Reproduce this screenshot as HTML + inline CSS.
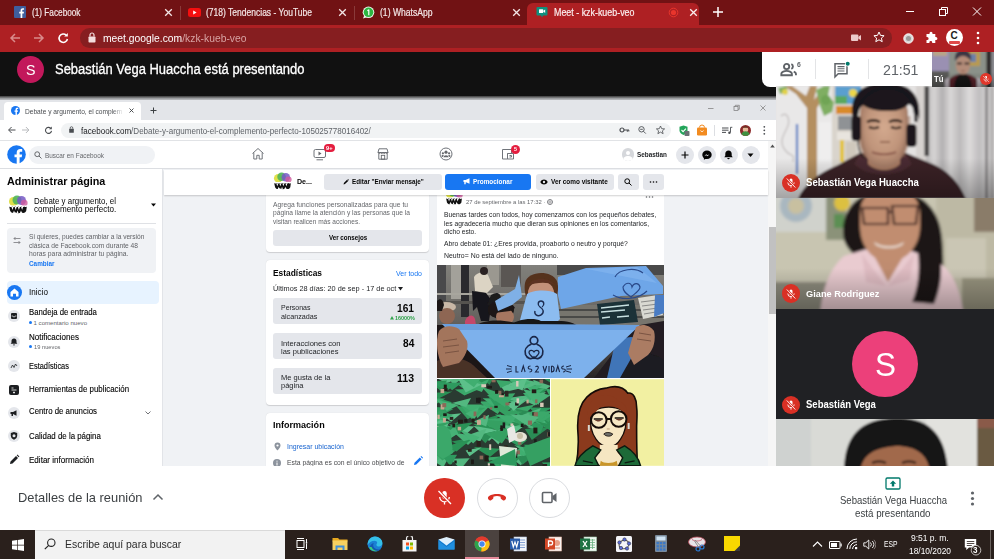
<!DOCTYPE html>
<html><head><meta charset="utf-8">
<style>
*{box-sizing:border-box;margin:0;padding:0}
html,body{width:994px;height:560px;overflow:hidden;background:#fff;font-family:"Liberation Sans",sans-serif;}
.a{position:absolute}
#root{position:relative;width:994px;height:560px;overflow:hidden}
.t{position:absolute;white-space:nowrap;line-height:1;transform-origin:0 0}
</style></head><body>
<div id="root">
<!-- CHROME TAB STRIP -->
<div class="a" style="left:0;top:0;width:994px;height:25px;background:#711214"></div>
<div class="a" style="left:527px;top:3px;width:172px;height:23px;background:#ae2023;border-radius:6px 6px 0 0"></div>
<!-- tab 1 facebook -->
<svg class="a" style="left:14px;top:6px" width="12" height="12" viewBox="0 0 12 12"><rect width="12" height="12" rx="1" fill="#3f5e9e"/><path d="M8.3 12V7.6h1.4l.25-1.8H8.3V4.7c0-.5.15-.85.9-.85h.85V2.3C9.9 2.28 9.4 2.2 8.8 2.2 7.5 2.2 6.6 3 6.6 4.5v1.3H5.2v1.8h1.4V12z" fill="#fff"/></svg>
<div class="t" style="left:32px;top:8.00px;font-size:10.3px;color:#f3e6e6;transform:scaleX(0.7992);-webkit-text-stroke:.2px #f3e6e6">(1) Facebook</div>
<svg class="a" style="left:164px;top:8px" width="9" height="9" viewBox="0 0 9 9"><path d="M1.2 1.2L7.8 7.8M7.8 1.2L1.2 7.8" stroke="#f3e6e6" stroke-width="1.3"/></svg>
<div class="a" style="left:180px;top:6px;width:1px;height:14px;background:#8a3a3a"></div>
<!-- tab 2 youtube -->
<svg class="a" style="left:188px;top:8px" width="13" height="9" viewBox="0 0 13 9"><rect width="13" height="9" rx="2.5" fill="#f40f0f"/><path d="M5.2 2.4L8.6 4.5 5.2 6.6z" fill="#fff"/></svg>
<div class="t" style="left:205.5px;top:8.00px;font-size:10.3px;color:#f3e6e6;transform:scaleX(0.8263);-webkit-text-stroke:.2px #f3e6e6">(718) Tendencias - YouTube</div>
<svg class="a" style="left:338px;top:8px" width="9" height="9" viewBox="0 0 9 9"><path d="M1.2 1.2L7.8 7.8M7.8 1.2L1.2 7.8" stroke="#f3e6e6" stroke-width="1.3"/></svg>
<div class="a" style="left:354px;top:6px;width:1px;height:14px;background:#8a3a3a"></div>
<!-- tab 3 whatsapp -->
<svg class="a" style="left:362px;top:6px" width="13" height="13" viewBox="0 0 13 13"><circle cx="6.5" cy="6.3" r="5.8" fill="#e9f7ea"/><circle cx="6.5" cy="6.3" r="4.8" fill="#2cb742"/><path d="M1 12.6l1.2-3.2 2 2z" fill="#e9f7ea"/><path d="M6.8 3.6v5.6M6.8 3.6L5.4 4.8" stroke="#fff" stroke-width="1.2" fill="none"/></svg>
<div class="t" style="left:380px;top:8.00px;font-size:10.3px;color:#f3e6e6;transform:scaleX(0.8338);-webkit-text-stroke:.2px #f3e6e6">(1) WhatsApp</div>
<svg class="a" style="left:512px;top:8px" width="9" height="9" viewBox="0 0 9 9"><path d="M1.2 1.2L7.8 7.8M7.8 1.2L1.2 7.8" stroke="#f3e6e6" stroke-width="1.3"/></svg>
<!-- tab 4 meet (active) -->
<svg class="a" style="left:536px;top:6px" width="12" height="12" viewBox="0 0 12 12"><path d="M1.5 1h9a1 1 0 0 1 1 1v6.5a1 1 0 0 1-1 1H7L6 11.5 5 9.5H1.5a1 1 0 0 1-1-1V2a1 1 0 0 1 1-1z" fill="#0f8f7d"/><rect x="3" y="3.3" width="4.2" height="3.6" rx=".5" fill="#fff"/><path d="M7.2 4.8L9.2 3.4v3.6L7.2 5.6z" fill="#fff"/></svg>
<div class="t" style="left:554px;top:8.00px;font-size:10.3px;color:#fbeeee;transform:scaleX(0.8628);-webkit-text-stroke:.2px #fbeeee">Meet - kzk-kueb-veo</div>
<svg class="a" style="left:668px;top:7px" width="11" height="11" viewBox="0 0 11 11"><circle cx="5.5" cy="5.5" r="4.3" fill="none" stroke="#e8352c" stroke-width="1"/><circle cx="5.5" cy="5.5" r="2.6" fill="#e8352c"/></svg>
<svg class="a" style="left:689px;top:8px" width="9" height="9" viewBox="0 0 9 9"><path d="M1.2 1.2L7.8 7.8M7.8 1.2L1.2 7.8" stroke="#fbeeee" stroke-width="1.3"/></svg>
<svg class="a" style="left:712px;top:6px" width="12" height="12" viewBox="0 0 12 12"><path d="M6 1v10M1 6h10" stroke="#fff" stroke-width="1.5"/></svg>
<!-- window controls -->
<svg class="a" style="left:905px;top:6px" width="80" height="12" viewBox="0 0 80 12"><path d="M1 5.5h8" stroke="#fff" stroke-width="1"/><rect x="34.5" y="3.5" width="6" height="6" fill="none" stroke="#fff" stroke-width="1"/><path d="M36.5 3.5v-2h6v6h-2" fill="none" stroke="#fff" stroke-width="1"/><path d="M68 1.5l8 8M76 1.5l-8 8" stroke="#fff" stroke-width="1"/></svg>
<!-- ADDRESS BAR -->
<div class="a" style="left:0;top:25px;width:994px;height:27px;background:#ae2023"></div>
<div class="a" style="left:80px;top:28.300px;width:812px;height:19.400px;border-radius:9.700px;background:#861e20"></div>
<svg class="a" style="left:9px;top:32px" width="62" height="12" viewBox="0 0 62 12"><path d="M11 6H2.5M6 2L2 6l4 4" stroke="#d98b8b" stroke-width="1.5" fill="none"/><path d="M25 6h8.5M30 2l4 4-4 4" stroke="#d98b8b" stroke-width="1.5" fill="none"/><path d="M57.2 3.2A4.2 4.2 0 1 0 58.4 7" stroke="#fff" stroke-width="1.6" fill="none"/><path d="M58.8 1v3.6h-3.6z" fill="#fff"/></svg>
<svg class="a" style="left:88px;top:32px" width="8" height="11" viewBox="0 0 8 11"><rect x=".5" y="4.5" width="7" height="6" rx=".8" fill="#f3dede"/><path d="M2 4.5V3a2 2 0 0 1 4 0v1.5" stroke="#f3dede" stroke-width="1.2" fill="none"/></svg>
<div class="t" style="left:103px;top:33.00px;font-size:11.3px;color:#fff;transform:scaleX(0.9139);">meet.google.com<span style="color:#d8a3a3">/kzk-kueb-veo</span></div>
<!-- toolbar right icons -->
<svg class="a" style="left:850.500px;top:34px" width="10.500" height="7.300" viewBox="0 0 13 9"><rect x="0" y=".5" width="9" height="8" rx="1" fill="#ecc9c9"/><path d="M9 3.4L12.5 1v7L9 5.6z" fill="#ecc9c9"/></svg>
<svg class="a" style="left:873px;top:31px" width="12" height="12" viewBox="0 0 12 12"><path d="M6 1l1.5 3.4 3.6.3-2.7 2.4.8 3.6L6 8.8 2.8 10.7l.8-3.6L.9 4.7l3.6-.3z" fill="none" stroke="#fff" stroke-width="1"/></svg>
<svg class="a" style="left:902.500px;top:32.500px" width="11" height="11" viewBox="0 0 14 14"><circle cx="7" cy="7" r="6" fill="#d9d9d9" stroke="#fff" stroke-width="1.2"/><circle cx="7" cy="7" r="3.2" fill="#9a9a9a"/></svg>
<svg class="a" style="left:924px;top:31px" width="14" height="14" viewBox="0 0 14 14"><path d="M5.5 2.2a1.5 1.5 0 0 1 3 0V3h2.8v2.9h.6a1.5 1.5 0 0 1 0 3h-.6V12H8.2v-.7a1.4 1.4 0 0 0-2.8 0v.7H2.5V8.9h.6a1.5 1.5 0 0 0 0-3h-.6V3h3z" fill="#fff"/></svg>
<div class="a" style="left:946px;top:29px;width:17px;height:17px;border-radius:50%;background:#fff;overflow:hidden"><div class="t" style="left:4.5px;top:1.5px;font-size:10px;font-weight:bold;color:#222">C</div><div class="a" style="left:3px;top:11.5px;width:11px;height:3px;background:#e04a4a;border-radius:1px"></div></div>
<svg class="a" style="left:976px;top:31px" width="4" height="14" viewBox="0 0 4 14"><circle cx="2" cy="2" r="1.3" fill="#fff"/><circle cx="2" cy="7" r="1.3" fill="#fff"/><circle cx="2" cy="12" r="1.3" fill="#fff"/></svg>
<!-- MEET TOP BAR -->
<div class="a" style="left:0;top:52px;width:994px;height:44px;background:#111111"></div>
<div class="a" style="left:17px;top:55.5px;width:27px;height:27px;border-radius:50%;background:#c2185b"></div>
<div class="t" style="left:26px;top:62.00px;font-size:14.9918px;color:#fff;transform:scaleX(0.9500);">S</div>
<div class="t" style="left:55.3px;top:62.00px;font-size:14px;color:#fff;transform:scaleX(0.9264);-webkit-text-stroke:.3px #fff">Sebastián Vega Huaccha está presentando</div>
<!-- meet top-right pill -->
<div class="a" style="left:762px;top:51.5px;width:170px;height:35px;background:#fff;border-radius:0 0 0 8px"></div>
<div class="a" style="left:815px;top:59px;width:1px;height:20px;background:#e3e4e6"></div>
<div class="a" style="left:868px;top:59px;width:1px;height:20px;background:#e3e4e6"></div>
<svg class="a" style="left:779.500px;top:60.500px" width="22" height="16.500" viewBox="0 0 20 15"><circle cx="6" cy="5" r="2.4" fill="none" stroke="#5f6368" stroke-width="1.700"/><path d="M1.2 13v-1.3c0-1.8 3-2.7 4.8-2.7s4.8.9 4.8 2.7V13z" fill="none" stroke="#5f6368" stroke-width="1.700"/><path d="M10.3 2.8a2.4 2.4 0 0 1 0 4.4M12.5 9.6c1.2.5 2 1.200 2 2.100V13" fill="none" stroke="#5f6368" stroke-width="1.700"/></svg>
<div class="t" style="left:796.5px;top:61.00px;font-size:7.5px;color:#5f6368;font-weight:bold;transform:scaleX(0.9110);">6</div>
<svg class="a" style="left:833px;top:61px" width="18" height="18" viewBox="0 0 18 18"><path d="M2 2.700h12v10H5.200L2 16z" fill="none" stroke="#5f6368" stroke-width="1.5"/><path d="M4.500 5.600h7M4.500 7.800h7M4.500 10h7" stroke="#5f6368" stroke-width="1.100"/><circle cx="14.700" cy="2.700" r="2.700" fill="#fff"/><circle cx="14.700" cy="2.700" r="2" fill="#00796b"/></svg>
<div class="t" style="left:882.5px;top:63.00px;font-size:14.9324px;color:#5f6368;transform:scaleX(0.9500);">21:51</div>
<!-- PRESENTATION (inner screen share) -->
<div class="a" style="left:0;top:95.5px;width:776px;height:5px;background:linear-gradient(#3a3a3a,#9b9da0 50%,#d6d8dc)"></div>
<div class="a" style="left:0;top:100px;width:776px;height:20px;background:#e3e5e9"></div>
<div class="a" style="left:4px;top:101.500px;width:137px;height:19px;background:#fff;border-radius:4px 4px 0 0"></div>
<svg class="a" style="left:10.500px;top:105.500px" width="9" height="9" viewBox="0 0 9 9"><circle cx="4.500" cy="4.500" r="4.500" fill="#1877f2"/><path d="M5.900 9V5.700h1l.2-1.300H5.900v-.800c0-.4.100-.6.600-.6h.7V1.900c-.1 0-.5-.1-1-.1-1 0-1.700.6-1.700 1.700v.9h-1v1.300h1V9z" fill="#fff"/></svg>
<div class="t" style="left:24.5px;top:109.00px;font-size:6.96759px;color:#4a4d51;transform:scaleX(0.9500);">Debate y argumento, el complem</div>
<div class="a" style="left:112px;top:104px;width:12px;height:12px;background:linear-gradient(90deg,rgba(255,255,255,0),#fff)"></div>
<svg class="a" style="left:128.500px;top:107.500px" width="5" height="5" viewBox="0 0 5 5"><path d="M.5.500l4 4M4.500.500l-4 4" stroke="#3c4043" stroke-width=".9"/></svg>
<svg class="a" style="left:149.500px;top:107px" width="7" height="7" viewBox="0 0 7 7"><path d="M3.500.500v6M.500 3.500h6" stroke="#3c4043" stroke-width="1"/></svg>
<svg class="a" style="left:706px;top:104px" width="62" height="8" viewBox="0 0 62 8"><path d="M2 4.500h5.500" stroke="#777" stroke-width=".7"/><rect x="28" y="2.500" width="4" height="4" fill="none" stroke="#777" stroke-width=".7"/><path d="M29.300 2.500V1.300h4v4h-1.300" fill="none" stroke="#777" stroke-width=".7"/><path d="M54.500 1.500l5 5M59.500 1.500l-5 5" stroke="#777" stroke-width=".7"/></svg>
<!-- inner toolbar -->
<div class="a" style="left:0;top:120px;width:776px;height:20.500px;background:#fff;border-bottom:1px solid #e1e3e6"></div>
<div class="a" style="left:61px;top:122.500px;width:610px;height:15px;border-radius:7.500px;background:#f1f3f4"></div>
<svg class="a" style="left:7px;top:126px" width="48" height="8" viewBox="0 0 48 8"><path d="M8.500 4H1.800M4.600 1L1.600 4l3 3" stroke="#4a4d51" stroke-width="1" fill="none"/><path d="M15 4h6.700M18.900 1l3 3-3 3" stroke="#b8babd" stroke-width="1" fill="none"/><path d="M43.600 2.200A3 3 0 1 0 44.500 4.800" stroke="#4a4d51" stroke-width="1.100" fill="none"/><path d="M44.800.500v2.700h-2.700z" fill="#4a4d51"/></svg>
<svg class="a" style="left:68.500px;top:126px" width="5" height="7" viewBox="0 0 5 7"><rect x=".2" y="2.800" width="4.600" height="4" rx=".5" fill="#4a4d51"/><path d="M1.200 2.800V2a1.300 1.300 0 0 1 2.600 0v.8" stroke="#4a4d51" stroke-width=".8" fill="none"/></svg>
<div class="t" style="left:80.5px;top:127.00px;font-size:8.48881px;color:#202124;transform:scaleX(0.9500);">facebook.com<span style="color:#5f6368">/Debate-y-argumento-el-complemento-perfecto-105025778016402/</span></div>
<svg class="a" style="left:619px;top:125px" width="48" height="10" viewBox="0 0 48 10"><circle cx="3" cy="5" r="2" fill="none" stroke="#4a4d51" stroke-width="1.200"/><path d="M5 5h5M8.300 5v1.800M9.800 5v1.500" stroke="#4a4d51" stroke-width="1"/><circle cx="22.500" cy="4.300" r="2.700" fill="none" stroke="#4a4d51" stroke-width=".9"/><path d="M24.500 6.300l2.300 2.300M21.200 4.300h2.600" stroke="#4a4d51" stroke-width=".9"/><path d="M41.500 1l1.200 2.700 2.900.2-2.200 1.900.7 2.900-2.600-1.600-2.600 1.600.7-2.900-2.200-1.900 2.900-.2z" fill="none" stroke="#4a4d51" stroke-width=".8"/></svg>
<svg class="a" style="left:678px;top:124px" width="92" height="13" viewBox="0 0 92 13"><path d="M5.500 1.500l4 1.200v3.800c0 2.300-2 3.800-4 4.500-2-.7-4-2.200-4-4.500V2.700z" fill="#23a55a"/><path d="M3.500 6l1.600 1.600 2.800-3" stroke="#fff" stroke-width="1.100" fill="none"/><rect x="6.500" y="7" width="5" height="5" rx=".8" fill="#6b7075"/><rect x="19" y="3.500" width="10" height="8" rx="1.200" fill="#f28b20"/><path d="M21.500 3.500a2.500 2.500 0 0 1 5 0" fill="none" stroke="#f28b20" stroke-width="1"/><path d="M22.500 6.500a1.600 1.600 0 0 0 3 0" fill="none" stroke="#fff" stroke-width=".8"/><path d="M44 4h6.500M44 6.200h6.500M44 8.400h4" stroke="#4a4d51" stroke-width="1"/><path d="M52.500 3.300v5.200" stroke="#4a4d51" stroke-width=".9"/><circle cx="51.400" cy="8.700" r="1.200" fill="#4a4d51"/><path d="M52.500 3.300h1.800" stroke="#4a4d51" stroke-width=".9"/><circle cx="67.500" cy="6.500" r="5.500" fill="#8c2a2a"/><circle cx="67.500" cy="5.500" r="2.700" fill="#e7b99a"/><path d="M63.400 10.200a4.300 4.300 0 0 1 8.200 0 5.500 5.500 0 0 1-8.200 0z" fill="#3f8f3f"/><path d="M64.600 4.500a3 3 0 0 1 5.800 0l-1-.8h-3.800z" fill="#5a2a1a"/><circle cx="86.300" cy="2.800" r=".9" fill="#4a4d51"/><circle cx="86.300" cy="6.300" r=".9" fill="#4a4d51"/><circle cx="86.300" cy="9.800" r=".9" fill="#4a4d51"/></svg>
<div class="a" style="left:714px;top:125px;width:1px;height:11px;background:#dcdee2"></div>
<!-- FB page bg -->
<div class="a" style="left:0;top:140.500px;width:768px;height:325.500px;background:#f0f2f5"></div>
<!-- scrollbar -->
<div class="a" style="left:768px;top:140.500px;width:8px;height:325.500px;background:#f6f6f6"></div>
<div class="a" style="left:769px;top:227px;width:7px;height:87px;background:#c1c1c1"></div>
<svg class="a" style="left:769.500px;top:144px" width="5" height="4" viewBox="0 0 5 4"><path d="M2.500.500L4.800 3.500H.2z" fill="#505050"/></svg>
<!-- FB header -->
<div class="a" style="left:0;top:140.500px;width:768px;height:28.500px;background:#fff;border-bottom:1px solid #dcdee2"></div>
<svg class="a" style="left:6.500px;top:145px" width="19" height="19" viewBox="0 0 19 19"><circle cx="9.500" cy="9.500" r="9.300" fill="#1877f2"/><path d="M12.600 19v-6.700h2.100l.4-2.700h-2.500V8c0-.8.300-1.300 1.300-1.300h1.300V4.300c-.3 0-1-.2-2-.2-2.100 0-3.500 1.300-3.500 3.600v1.900H7.500v2.700h2.200V19z" fill="#fff"/></svg>
<div class="a" style="left:29px;top:146px;width:126px;height:17.500px;border-radius:9px;background:#f0f2f5"></div>
<svg class="a" style="left:34px;top:151px" width="8" height="8" viewBox="0 0 8 8"><circle cx="3.200" cy="3.200" r="2.400" fill="none" stroke="#65676b" stroke-width="1"/><path d="M5 5l2.500 2.500" stroke="#65676b" stroke-width="1"/></svg>
<div class="t" style="left:44.5px;top:153.00px;font-size:6.7711px;color:#65676b;transform:scaleX(0.9500);">Buscar en Facebook</div>
<!-- nav icons -->
<svg class="a" style="left:251px;top:147px" width="14" height="14" viewBox="0 0 14 14"><path d="M1.500 6.500L7 1.500l5.500 5M2.800 5.600v6.400h3V8.300h2.400V12h3V5.600" fill="none" stroke="#70747a" stroke-width="1"/></svg>
<svg class="a" style="left:313px;top:148px" width="14" height="13" viewBox="0 0 14 13"><rect x="1" y="1.500" width="11.500" height="8" rx="1.500" fill="none" stroke="#70747a" stroke-width="1"/><path d="M5.500 3.600l3 1.900-3 1.900z" fill="#65676b"/><path d="M3.500 11.800h6.500" stroke="#70747a" stroke-width="1"/></svg>
<div class="a" style="left:323.500px;top:144px;width:11px;height:8px;border-radius:4px;background:#e41e3f"></div>
<div class="t" style="left:325.7px;top:145.00px;font-size:6.00102px;color:#fff;font-weight:bold;transform:scaleX(0.9500);">9+</div>
<svg class="a" style="left:375.500px;top:147px" width="14" height="14" viewBox="0 0 14 14"><path d="M2 5.500L3 1.800h8l1 3.700M2 5.500h10M2.800 6.500v5.700h8.400V6.500" fill="none" stroke="#70747a" stroke-width="1"/><path d="M2 5.500c0 1.300 2.500 1.300 2.500 0 0 1.300 2.500 1.300 2.500 0 0 1.300 2.500 1.300 2.500 0 0 1.300 2.500 1.300 2.500 0" fill="none" stroke="#65676b" stroke-width=".9"/><rect x="5.300" y="8.300" width="3.400" height="3.900" fill="none" stroke="#65676b" stroke-width=".9"/></svg>
<svg class="a" style="left:438.500px;top:147px" width="14" height="14" viewBox="0 0 14 14"><circle cx="7" cy="7" r="6" fill="none" stroke="#70747a" stroke-width="1"/><circle cx="7" cy="5.200" r="1.600" fill="#65676b"/><circle cx="3.900" cy="6.300" r="1.100" fill="#65676b"/><circle cx="10.100" cy="6.300" r="1.100" fill="#65676b"/><path d="M4.300 10.300a2.800 2.800 0 0 1 5.400 0zM2.200 9.400a2 2 0 0 1 2.600-1.300l-.9 1.800zM11.800 9.400a2 2 0 0 0-2.600-1.300l.9 1.800z" fill="#65676b"/></svg>
<svg class="a" style="left:501px;top:148px" width="14" height="13" viewBox="0 0 14 13"><path d="M1.500 1.500h9v4h-4v5.500h-5zM6.500 5.500h6v5.500h-6M8.500 7.500h2v1.500h-2" fill="none" stroke="#70747a" stroke-width="1"/></svg>
<div class="a" style="left:510.500px;top:144.500px;width:9px;height:9px;border-radius:50%;background:#e41e3f"></div>
<div class="t" style="left:513.6px;top:147.00px;font-size:5.67791px;color:#fff;font-weight:bold;transform:scaleX(0.9500);">5</div>
<!-- profile + round buttons -->
<div class="a" style="left:621.500px;top:148px;width:12.500px;height:12.500px;border-radius:50%;background:#d5d7db;overflow:hidden"><div class="a" style="left:4px;top:2.500px;width:4.500px;height:4.500px;border-radius:50%;background:#fff"></div><div class="a" style="left:1.500px;top:8px;width:9.500px;height:8px;border-radius:50%;background:#fff"></div></div>
<div class="t" style="left:636.7px;top:152.00px;font-size:6.8px;color:#1c1e21;font-weight:bold;transform:scaleX(0.9338);">Sebastian</div>
<div class="a" style="left:676px;top:145.500px;width:18px;height:18px;border-radius:50%;background:#e4e6eb"></div>
<div class="a" style="left:698px;top:145.500px;width:18px;height:18px;border-radius:50%;background:#e4e6eb"></div>
<div class="a" style="left:719.500px;top:145.500px;width:18px;height:18px;border-radius:50%;background:#e4e6eb"></div>
<div class="a" style="left:741.500px;top:145.500px;width:18px;height:18px;border-radius:50%;background:#e4e6eb"></div>
<svg class="a" style="left:676px;top:145.500px" width="84" height="18" viewBox="0 0 84 18"><path d="M9 5.500v7M5.500 9h7" stroke="#050505" stroke-width="1.200"/><path d="M31 4.500c-2.700 0-4.700 1.900-4.700 4.300 0 1.300.6 2.500 1.600 3.300v1.600l1.500-.8c.5.100 1 .2 1.600.2 2.700 0 4.700-1.900 4.700-4.300S33.700 4.500 31 4.500z" fill="#050505"/><path d="M28.300 10.200l1.900-2 1.400 1 1.800-1-1.800 2-1.400-1z" fill="#e4e6eb"/><path d="M52.500 4.500c2 0 3.200 1.500 3.200 3.200v2l1 1.500h-8.400l1-1.500v-2c0-1.700 1.200-3.200 3.200-3.200zM51.300 12h2.400a1.200 1.200 0 0 1-2.400 0z" fill="#050505"/><path d="M71.500 7.500h6l-3 3.500z" fill="#050505"/></svg>
<!-- SIDEBAR -->
<div class="a" style="left:0;top:169px;width:163px;height:297px;background:#fff;border-right:1px solid #e2e4e8"></div>
<div class="t" style="left:7px;top:176.00px;font-size:11.3778px;color:#050505;font-weight:bold;transform:scaleX(0.9500);">Administrar página</div>
<!-- page avatar -->
<svg class="a" style="left:7.500px;top:194.500px" width="20" height="20" viewBox="0 0 20 20"><circle cx="10" cy="10" r="10" fill="#fff"/><circle cx="5.500" cy="6.500" r="4.500" fill="#dfe04a"/><circle cx="9" cy="5" r="4.500" fill="#4fb45a" fill-opacity=".9"/><circle cx="13.500" cy="5.500" r="4.500" fill="#7458c4" fill-opacity=".85"/><circle cx="16.300" cy="8" r="3.300" fill="#cf5a9c" fill-opacity=".8"/><rect x="0" y="10.500" width="20" height="9.500" fill="#fff"/><path d="M1.200 11.500c1 .8 2 .8 3 0 1 .8 2 .8 3 0 1 .8 2 .8 3 0 1 .8 2 .8 3 0 1 .8 2 .8 3 0 1 .8 1.800.8 2.600 0l-.6 4.500c-1 2.200-3.500 2.500-5 1.200-1.500 1.300-4.500 1.300-6 0-1.500 1.300-4 1-5-1.200z" fill="#111"/><path d="M3.500 12l1 3 1-3zM6.700 12l1 3 1-3zM9.900 12l1 3 1-3zM13.100 12l1 3 1-3zM5 18l1-2.600 1 2.600zM8.500 18.300l1-2.800 1 2.800zM12 18l1-2.600 1 2.600z" fill="#fff"/></svg>
<div class="t" style="left:34px;top:197.00px;font-size:8.3px;color:#050505;transform:scaleX(0.9504);">Debate y argumento, el</div>
<div class="t" style="left:34px;top:205.00px;font-size:8.53728px;color:#050505;transform:scaleX(0.9500);">complemento perfecto.</div>
<svg class="a" style="left:150.500px;top:203px" width="5" height="4" viewBox="0 0 5 4"><path d="M0 .5h5L2.500 3.500z" fill="#050505"/></svg>
<div class="a" style="left:7px;top:223px;width:149px;height:1px;background:#dfe1e5"></div>
<div class="a" style="left:7px;top:227.500px;width:149px;height:45.500px;border-radius:4px;background:#f0f2f5"></div>
<svg class="a" style="left:13px;top:235.500px" width="8" height="9" viewBox="0 0 8 9"><path d="M7.500 2.500H1M2.500 1L1 2.500 2.500 4M.5 6.500H7M5.500 5L7 6.500 5.500 8" stroke="#65676b" stroke-width=".7" fill="none"/></svg>
<div class="t" style="left:28.5px;top:234.00px;font-size:6.94349px;color:#606266;transform:scaleX(0.9500);">Si quieres, puedes cambiar a la versión</div>
<div class="t" style="left:28.5px;top:242.00px;font-size:7px;color:#606266;transform:scaleX(0.9528);">clásica de Facebook.com durante 48</div>
<div class="t" style="left:28.5px;top:250.00px;font-size:7px;color:#606266;transform:scaleX(0.9686);">horas para administrar tu página.</div>
<div class="t" style="left:28.5px;top:260.00px;font-size:7px;color:#1877f2;font-weight:bold;transform:scaleX(0.9104);">Cambiar</div>
<!-- menu -->
<div class="a" style="left:7px;top:281px;width:152px;height:22.500px;border-radius:4px;background:#e7f3ff"></div>
<svg class="a" style="left:6.500px;top:284.500px" width="15" height="15" viewBox="0 0 15 15"><circle cx="7.500" cy="7.500" r="7.500" fill="#1877f2"/><path d="M7.500 3.500l4 3.500v4.500H9V8.800H6v2.700H3.500V7z" fill="#fff"/></svg>
<div class="t" style="left:28.6px;top:289.00px;font-size:8.2px;color:#050505;transform:scaleX(0.9925);">Inicio</div>
<svg class="a" style="left:8px;top:310px" width="12" height="12" viewBox="0 0 12 12"><circle cx="6" cy="6" r="6" fill="#e4e6eb"/><rect x="3" y="3" width="6" height="6" rx="1" fill="#1c1e21"/><path d="M3.500 6h1.500l.5 1h1l.5-1h1.500" stroke="#e4e6eb" stroke-width=".7" fill="none"/></svg>
<div class="t" style="left:28.6px;top:309.00px;font-size:8.2px;color:#050505;transform:scaleX(0.9499);-webkit-text-stroke:.12px #050505">Bandeja de entrada</div>
<div class="a" style="left:28.600px;top:321px;width:3.200px;height:3.200px;border-radius:50%;background:#1877f2"></div>
<div class="t" style="left:33.5px;top:320.00px;font-size:6.1px;color:#65676b;">1 comentario nuevo</div>
<svg class="a" style="left:8px;top:335.500px" width="12" height="12" viewBox="0 0 12 12"><circle cx="6" cy="6" r="6" fill="#e4e6eb"/><path d="M6 2.500c1.600 0 2.500 1.200 2.500 2.500v1.600l.8 1.200H2.700l.8-1.200V5c0-1.300.9-2.500 2.500-2.500zM5 8.400h2a1 1 0 0 1-2 0z" fill="#1c1e21"/></svg>
<div class="t" style="left:28.6px;top:334.00px;font-size:8.2px;color:#050505;transform:scaleX(0.9795);-webkit-text-stroke:.12px #050505">Notificaciones</div>
<div class="a" style="left:28.600px;top:345.200px;width:3.200px;height:3.200px;border-radius:50%;background:#1877f2"></div>
<div class="t" style="left:33.5px;top:344.00px;font-size:6.1px;color:#65676b;transform:scaleX(0.9414);">19 nuevos</div>
<svg class="a" style="left:8px;top:360px" width="12" height="12" viewBox="0 0 12 12"><circle cx="6" cy="6" r="6" fill="#e4e6eb"/><path d="M3 8l1.500-3 1.500 2.500L7.500 4 9 6" stroke="#1c1e21" stroke-width=".8" fill="none"/></svg>
<div class="t" style="left:28.6px;top:363.00px;font-size:8.2px;color:#050505;transform:scaleX(0.9048);-webkit-text-stroke:.12px #050505">Estadísticas</div>
<svg class="a" style="left:8px;top:384px" width="12" height="12" viewBox="0 0 12 12"><rect x="1" y="1" width="10" height="10" rx="2" fill="#1c1e21"/><path d="M3.500 4h2M3.500 6h5M6 7.500v2M5 8.500h2" stroke="#fff" stroke-width=".8"/></svg>
<div class="t" style="left:28.6px;top:386.00px;font-size:8.2px;color:#050505;transform:scaleX(0.9642);-webkit-text-stroke:.12px #050505">Herramientas de publicación</div>
<svg class="a" style="left:8px;top:406.500px" width="12" height="12" viewBox="0 0 12 12"><circle cx="6" cy="6" r="6" fill="#e4e6eb"/><path d="M2.500 5h2.500l3.500-1.800v5.600L5 7H2.500zM3.500 7v2h1.500V7" fill="#1c1e21"/></svg>
<div class="t" style="left:28.6px;top:408.00px;font-size:8.2px;color:#050505;transform:scaleX(0.9562);-webkit-text-stroke:.12px #050505">Centro de anuncios</div>
<svg class="a" style="left:145px;top:411px" width="6" height="4" viewBox="0 0 6 4"><path d="M.5.500L3 3l2.500-2.500" stroke="#606266" stroke-width=".9" fill="none"/></svg>
<svg class="a" style="left:8px;top:430px" width="12" height="12" viewBox="0 0 12 12"><circle cx="6" cy="6" r="6" fill="#e4e6eb"/><path d="M6 2l3.200 1v2.800c0 1.900-1.500 3.200-3.200 3.900-1.700-.7-3.200-2-3.200-3.900V3z" fill="#1c1e21"/><circle cx="6" cy="5.700" r="1.500" fill="#e4e6eb"/></svg>
<div class="t" style="left:28.6px;top:433.00px;font-size:8.2px;color:#050505;transform:scaleX(0.9629);-webkit-text-stroke:.12px #050505">Calidad de la página</div>
<svg class="a" style="left:8px;top:454px" width="12" height="12" viewBox="0 0 12 12"><path d="M2 10l.5-2.500L8 2l2 2-5.500 5.500zM8.700 1.300l.7-.7 2 2-.7.700z" fill="#1c1e21"/></svg>
<div class="t" style="left:28.6px;top:457.00px;font-size:8.2px;color:#050505;transform:scaleX(0.9836);-webkit-text-stroke:.12px #050505">Editar información</div>
<!-- middle column: cards -->
<div class="a" style="left:266px;top:190px;width:163px;height:62px;background:#fff;border-radius:0 0 4px 4px;box-shadow:0 .5px 1px rgba(0,0,0,.15)"></div>
<div class="t" style="left:273px;top:201.00px;font-size:7px;color:#65676b;transform:scaleX(0.9583);">Agrega funciones personalizadas para que tu</div>
<div class="t" style="left:273px;top:209.00px;font-size:7px;color:#65676b;transform:scaleX(0.9541);">página llame la atención y las personas que la</div>
<div class="t" style="left:273px;top:218.00px;font-size:7px;color:#65676b;transform:scaleX(0.9356);">visitan realicen más acciones.</div>
<div class="a" style="left:273px;top:229.500px;width:149px;height:16.500px;border-radius:3px;background:#e4e6eb"></div>
<div class="t" style="left:328.8px;top:235.00px;font-size:6.5px;color:#050505;font-weight:bold;transform:scaleX(0.9525);">Ver consejos</div>
<div class="a" style="left:266px;top:260px;width:163px;height:145px;background:#fff;border-radius:4px;box-shadow:0 .5px 1px rgba(0,0,0,.15)"></div>
<div class="t" style="left:273px;top:269.00px;font-size:8.8px;color:#050505;font-weight:bold;transform:scaleX(0.9540);">Estadísticas</div>
<div class="t" style="left:396px;top:270.00px;font-size:7.34676px;color:#1877f2;transform:scaleX(0.9500);">Ver todo</div>
<div class="t" style="left:273px;top:285.00px;font-size:7.71835px;color:#1c1e21;transform:scaleX(0.9500);">Últimos 28 días: 20 de sep - 17 de oct</div>
<svg class="a" style="left:397.500px;top:287px" width="5" height="3.500" viewBox="0 0 5 3.500"><path d="M0 0h5L2.500 3.500z" fill="#1c1e21"/></svg>
<div class="a" style="left:273px;top:298px;width:149px;height:25.500px;border-radius:3px;background:#e4e6eb"></div>
<div class="t" style="left:280.5px;top:304.00px;font-size:7.7px;color:#1c1e21;transform:scaleX(0.9068);">Personas</div>
<div class="t" style="left:280.5px;top:313.00px;font-size:7.7px;color:#1c1e21;transform:scaleX(0.9370);">alcanzadas</div>
<div class="t" style="left:397px;top:303.00px;font-size:10.8px;color:#050505;font-weight:bold;transform:scaleX(0.9434);">161</div>
<svg class="a" style="left:390px;top:316.200px" width="4" height="3.500" viewBox="0 0 4 3.500"><path d="M2 0l2 3.500H0z" fill="#31a24c"/></svg>
<div class="t" style="left:394.5px;top:316.00px;font-size:5.73641px;color:#31a24c;font-weight:bold;transform:scaleX(0.9500);">16000%</div>
<div class="a" style="left:273px;top:333px;width:149px;height:25.500px;border-radius:3px;background:#e4e6eb"></div>
<div class="t" style="left:280.5px;top:340.00px;font-size:7.7px;color:#1c1e21;transform:scaleX(0.9859);">Interacciones con</div>
<div class="t" style="left:280.5px;top:348.00px;font-size:7.7px;color:#1c1e21;transform:scaleX(0.9805);">las publicaciones</div>
<div class="t" style="left:403px;top:338.00px;font-size:10.8px;color:#050505;font-weight:bold;transform:scaleX(0.9406);">84</div>
<div class="a" style="left:273px;top:368px;width:149px;height:25.500px;border-radius:3px;background:#e4e6eb"></div>
<div class="t" style="left:280.5px;top:374.00px;font-size:7.7px;color:#1c1e21;transform:scaleX(0.9800);">Me gusta de la</div>
<div class="t" style="left:280.5px;top:382.00px;font-size:7.7px;color:#1c1e21;transform:scaleX(0.9730);">página</div>
<div class="t" style="left:397px;top:373.00px;font-size:10.8px;color:#050505;font-weight:bold;transform:scaleX(0.9756);">113</div>
<div class="a" style="left:266px;top:412.500px;width:163px;height:60px;background:#fff;border-radius:4px;box-shadow:0 .5px 1px rgba(0,0,0,.15)"></div>
<div class="t" style="left:273px;top:420.00px;font-size:9.50962px;color:#050505;font-weight:bold;transform:scaleX(0.9500);">Información</div>
<svg class="a" style="left:273.500px;top:442px" width="7" height="9" viewBox="0 0 7 9"><path d="M3.500.500a3 3 0 0 1 3 3c0 2-3 5-3 5s-3-3-3-5a3 3 0 0 1 3-3z" fill="#8c939d"/><circle cx="3.500" cy="3.500" r="1.100" fill="#fff"/></svg>
<div class="t" style="left:287px;top:443.00px;font-size:7.34247px;color:#1763cf;transform:scaleX(0.9500);">Ingresar ubicación</div>
<svg class="a" style="left:273px;top:458.500px" width="8" height="8" viewBox="0 0 8 8"><circle cx="4" cy="4" r="4" fill="#8c939d"/><path d="M4 3.500v3M4 1.700v1" stroke="#fff" stroke-width="1"/></svg>
<div class="t" style="left:287px;top:460.00px;font-size:7.1306px;color:#4b4c4f;transform:scaleX(0.9500);">Esta página es con el único objetivo de</div>
<svg class="a" style="left:413px;top:456px" width="10" height="10" viewBox="0 0 10 10"><path d="M1 9l.5-2.300L6.800 1.400l1.800 1.800L3.300 8.500zM7.500.800L8.300 0l1.800 1.800-.8.800z" fill="#1877f2"/></svg>
<!-- right column: post -->
<div class="a" style="left:437px;top:190px;width:227px;height:280px;background:#fff"></div>
<svg class="a" style="left:444.500px;top:188.200px" width="18" height="18" viewBox="0 0 20 20"><circle cx="10" cy="10" r="10" fill="#fff"/><circle cx="5.500" cy="6.500" r="4.500" fill="#dfe04a"/><circle cx="9" cy="5" r="4.500" fill="#4fb45a" fill-opacity=".9"/><circle cx="13.500" cy="5.500" r="4.500" fill="#7458c4" fill-opacity=".85"/><circle cx="16.300" cy="8" r="3.300" fill="#cf5a9c" fill-opacity=".8"/><rect x="0" y="10.500" width="20" height="9.500" fill="#fff"/><path d="M1.200 11.500c1 .8 2 .8 3 0 1 .8 2 .8 3 0 1 .8 2 .8 3 0 1 .8 2 .8 3 0 1 .8 2 .8 3 0 1 .8 1.800.8 2.600 0l-.6 4.500c-1 2.200-3.500 2.500-5 1.200-1.500 1.300-4.500 1.300-6 0-1.500 1.300-4 1-5-1.200z" fill="#111"/><path d="M3.500 12l1 3 1-3zM6.700 12l1 3 1-3zM9.900 12l1 3 1-3zM13.100 12l1 3 1-3zM5 18l1-2.600 1 2.600zM8.500 18.300l1-2.800 1 2.800zM12 18l1-2.600 1 2.600z" fill="#fff"/></svg>
<div class="t" style="left:465.7px;top:199.00px;font-size:6.19489px;color:#65676b;transform:scaleX(0.9500);">27 de septiembre a las 17:32 ·</div>
<svg class="a" style="left:547px;top:198.500px" width="6" height="6" viewBox="0 0 6 6"><circle cx="3" cy="3" r="2.500" fill="none" stroke="#65676b" stroke-width=".8"/><path d="M.5 3h5M3 .500v5" stroke="#65676b" stroke-width=".5"/></svg>
<div class="t" style="left:444.4px;top:212.00px;font-size:7.1px;color:#1c1e21;transform:scaleX(0.9445);">Buenas tardes con todos, hoy comenzamos con los pequeños debates,</div>
<div class="t" style="left:444.4px;top:221.00px;font-size:7.1px;color:#1c1e21;transform:scaleX(0.9470);">les agradecería mucho que dieran sus opiniones en los comentarios,</div>
<div class="t" style="left:444.4px;top:229.00px;font-size:7.1px;color:#1c1e21;transform:scaleX(0.9377);">dicho esto.</div>
<div class="t" style="left:444.4px;top:241.00px;font-size:7.1px;color:#1c1e21;transform:scaleX(0.9553);">Abro debate 01: ¿Eres provida, proaborto o neutro y porqué?</div>
<div class="t" style="left:444.4px;top:253.00px;font-size:7.1px;color:#1c1e21;transform:scaleX(0.9726);">Neutro= No está del lado de ninguno.</div>
<svg class="a" style="left:644.500px;top:195.500px" width="9" height="2" viewBox="0 0 9 2"><circle cx="1.500" cy="1" r=".8" fill="#65676b"/><circle cx="4.500" cy="1" r=".8" fill="#65676b"/><circle cx="7.500" cy="1" r=".8" fill="#65676b"/></svg>
<!-- sticky page bar -->
<div class="a" style="left:163.500px;top:169.500px;width:604.500px;height:25.500px;background:#fff;box-shadow:0 1px 1.500px rgba(0,0,0,.18)"></div>
<svg class="a" style="left:272.500px;top:172px" width="19" height="19" viewBox="0 0 20 20"><circle cx="10" cy="10" r="10" fill="#fff"/><circle cx="5.500" cy="6.500" r="4.500" fill="#dfe04a"/><circle cx="9" cy="5" r="4.500" fill="#4fb45a" fill-opacity=".9"/><circle cx="13.500" cy="5.500" r="4.500" fill="#7458c4" fill-opacity=".85"/><circle cx="16.300" cy="8" r="3.300" fill="#cf5a9c" fill-opacity=".8"/><rect x="0" y="10.500" width="20" height="9.500" fill="#fff"/><path d="M1.200 11.500c1 .8 2 .8 3 0 1 .8 2 .8 3 0 1 .8 2 .8 3 0 1 .8 2 .8 3 0 1 .8 2 .8 3 0 1 .8 1.800.8 2.600 0l-.6 4.500c-1 2.200-3.500 2.500-5 1.200-1.500 1.300-4.500 1.300-6 0-1.500 1.300-4 1-5-1.200z" fill="#111"/><path d="M3.500 12l1 3 1-3zM6.700 12l1 3 1-3zM9.900 12l1 3 1-3zM13.100 12l1 3 1-3zM5 18l1-2.600 1 2.600zM8.500 18.300l1-2.800 1 2.800zM12 18l1-2.600 1 2.600z" fill="#fff"/></svg>
<div class="t" style="left:297px;top:178.00px;font-size:7.4768px;color:#050505;font-weight:bold;transform:scaleX(0.9500);">De...</div>
<div class="a" style="left:323.500px;top:174px;width:118px;height:16px;border-radius:3px;background:#e4e6eb"></div>
<svg class="a" style="left:342.500px;top:179px" width="6" height="6" viewBox="0 0 10 10"><path d="M1 9l.5-2.300L6.800 1.400l1.800 1.800L3.300 8.500zM7.500.800L8.300 0l1.800 1.800-.8.800z" fill="#050505"/></svg>
<div class="t" style="left:351.5px;top:179.00px;font-size:6.64957px;color:#050505;font-weight:bold;transform:scaleX(0.9500);">Editar "Enviar mensaje"</div>
<div class="a" style="left:445px;top:173.500px;width:86px;height:16px;border-radius:3px;background:#1877f2"></div>
<svg class="a" style="left:462.500px;top:178px" width="8" height="7" viewBox="0 0 8 7"><path d="M.5 2h2L6.500.300v5.400L2.500 4h-2zM1.300 4v2.300h1.400V4" fill="#fff"/></svg>
<div class="t" style="left:473.4px;top:179.00px;font-size:6.72396px;color:#fff;font-weight:bold;transform:scaleX(0.9500);">Promocionar</div>
<div class="a" style="left:535.500px;top:173.500px;width:78px;height:16px;border-radius:3px;background:#e4e6eb"></div>
<svg class="a" style="left:540px;top:178.500px" width="8" height="6" viewBox="0 0 8 6"><path d="M.3 3C1.300 1.200 2.600.500 4 .500s2.700.700 3.700 2.500C6.700 4.800 5.400 5.500 4 5.500S1.300 4.800.300 3z" fill="#050505"/><circle cx="4" cy="3" r="1.200" fill="#e4e6eb"/></svg>
<div class="t" style="left:551px;top:179.00px;font-size:6.78955px;color:#050505;font-weight:bold;transform:scaleX(0.9500);">Ver como visitante</div>
<div class="a" style="left:617.500px;top:173.500px;width:21px;height:16px;border-radius:3px;background:#e4e6eb"></div>
<svg class="a" style="left:624px;top:177.500px" width="8" height="8" viewBox="0 0 8 8"><circle cx="3.200" cy="3.200" r="2.400" fill="none" stroke="#050505" stroke-width="1"/><path d="M5 5l2.500 2.500" stroke="#050505" stroke-width="1"/></svg>
<div class="a" style="left:642.500px;top:173.500px;width:21.500px;height:16px;border-radius:3px;background:#e4e6eb"></div>
<svg class="a" style="left:649px;top:180.500px" width="9" height="2" viewBox="0 0 9 2"><circle cx="1.500" cy="1" r=".8" fill="#050505"/><circle cx="4.500" cy="1" r=".8" fill="#050505"/><circle cx="7.500" cy="1" r=".8" fill="#050505"/></svg>
<!-- post photos -->
<svg class="a" style="left:437px;top:265px" width="227" height="113" viewBox="0 0 227 113">
<defs><linearGradient id="bg1" x1="0" y1="0" x2="0" y2="1"><stop offset="0" stop-color="#83827d"/><stop offset=".5" stop-color="#64625e"/><stop offset="1" stop-color="#262223"/></linearGradient></defs>
<filter id="blb" x="-5%" y="-5%" width="110%" height="110%"><feGaussianBlur stdDeviation=".5"/></filter><g filter="url(#blb)"><rect x="-3" y="-3" width="233" height="119" fill="url(#bg1)"/>
<rect x="0" y="0" width="9" height="40" fill="#4a4a4c"/><rect x="14" y="0" width="14" height="34" fill="#a3a19a"/><rect x="24" y="0" width="8" height="52" fill="#2c2b2e"/><rect x="50" y="0" width="12" height="20" fill="#9b9890"/><rect x="64" y="0" width="20" height="22" fill="#5a5652"/><rect x="120" y="0" width="107" height="10" fill="#4a4848"/>
<rect x="0" y="36" width="90" height="3" fill="#55534f"/><rect x="0" y="28" width="90" height="2" fill="#a8a69e"/>
<rect x="118" y="40" width="109" height="22" fill="#77746e"/><rect x="118" y="44" width="109" height="2" fill="#4a4846"/><rect x="118" y="51" width="109" height="2" fill="#4a4846"/>
<!-- white-shirt person -->
<path d="M37 12c3-5 10-6 14-2l5 12-6 6-12-2z" fill="#dcd4c4"/><circle cx="47" cy="6" r="4" fill="#2a2222"/><path d="M35 26l14 2 6 8-3 20h-8l-4-14-4 4z" fill="#18161a"/>
<path d="M54 30c6-4 10-2 10 4l-4 10-10-4z" fill="#1c1a1e"/>
<!-- left man with cap -->
<ellipse cx="9" cy="42" rx="10" ry="5" fill="#c9b8a6"/><ellipse cx="10" cy="51" rx="8" ry="8" fill="#8e6652"/><path d="M0 36c3-3 6-2 7 4l-2 6H0z" fill="#1a1818"/>
<path d="M28 56c2-6 8-8 10-2l1 6H28z" fill="#c4476a"/>
<!-- middle man -->
<ellipse cx="64" cy="45" rx="13" ry="9" fill="#1c1816"/><ellipse cx="68" cy="52" rx="9" ry="8.500" fill="#a57660"/><path d="M51 43c2-8 22-10 27 0l-5 3-16 2z" fill="#1c1816"/>
<path d="M40 60c8-6 30-6 44 0v4H40z" fill="#1a1818"/>
<!-- small flag left -->
<path d="M58 36l20-12 4-14 3 22-10 8-14 6z" fill="#7fb0e6"/>
<!-- flag top right -->
<path d="M121 12l28-9 60-2 17 20v8l-42 2-60 13-4-18z" fill="#6ea6e8"/><path d="M150 4l50-2 20 16-30-6z" fill="#86b8f0" fill-opacity=".6"/>
<path d="M186 22c3-5 8-5 9 0 2-5 7-4 8 0 0 4-6 7-9 10-4-3-8-5-8-10zM178 12c4-8 20-10 28-4M176 30c10 6 26 4 34-4" stroke="#2a4a8a" stroke-width="1.200" fill="none"/>
<!-- woman -->
<path d="M88 18c2-12 26-14 32-2 2 6 1 14-2 20l-26 2c-4-6-5-14-4-20z" fill="#55301e"/><ellipse cx="104" cy="28" rx="13" ry="12" fill="#c2917a"/><path d="M90 21c4-9 22-10 28-1-8-3-18-3-28 1z" fill="#5c3320"/>
<path d="M90 29c6-4 22-5 30 0l3 25-8 8H93l-10-7z" fill="#8cbcf0"/><path d="M104 36c-3 0-4 4-1 6 3 2 5 5 1 8-4 2-7-1-6-4M104 36c3 0 4 4 1 6" stroke="#1c2c50" stroke-width="1.400" fill="none"/>
<path d="M70 62c10-8 26-10 34-6l20 0c10 0 16 4 22 8z" fill="#141214"/>
<!-- signs -->
<path d="M160 39l37-4 4 22-38 3z" fill="#1a3038"/><path d="M164 43l28-3M164 47l24-2M165 53l8-1M180 52l12-1" stroke="#c8e0e0" stroke-width="1.300"/>
<path d="M201 33l20-3 5 20-20 4z" fill="#d9d9d2"/><path d="M204 37l16-2M205 41l16-2M206 45l15-2M207 49l12-2" stroke="#8a8a88" stroke-width="1"/>
<!-- dark corners / jackets -->
<path d="M0 60h12l50 53H0z" fill="#1b1719"/><path d="M0 96c10-6 26-4 36 4l14 13H0z" fill="#4a3028"/><path d="M227 56v57h-70l40-52z" fill="#201c20"/>
<path d="M178 78c10-8 22-8 32 0l6 35h-46z" fill="#3f74b8"/><path d="M218 30h9v18l-10 4z" fill="#4a7cc4"/><path d="M196 90c8-4 22-2 31 6v17h-44z" fill="#1e1a20"/>
<!-- bandana -->
<path d="M5 59l198 1-56 53H58z" fill="#7db1ec"/><path d="M6 59l196 1-4 5H12z" fill="#6a9fde"/>
<circle cx="97" cy="75.500" r="3.800" fill="none" stroke="#1a2848" stroke-width="1.700"/><path d="M94.500 79c-5 2-7.500 6-6 10.500 1.500 4 6 5.500 8.500 2.500 2.500 3 7 1.500 8.500-2.500 1.500-4.500-1-8.500-6-10.500" fill="none" stroke="#1a2848" stroke-width="1.700"/><path d="M97 93.500c-3-2.500-5-4-5-6.200 0-2.300 3.500-2.800 5-.5 1.500-2.300 5-1.800 5 .5 0 2.200-2 3.700-5 6.200z" fill="none" stroke="#1a2848" stroke-width="1.300"/>
<path d="M79 101v6h2.500M84.500 107l1.800-6 1.800 6M93.500 101c-3 0-3 3-.5 3s2.500 3-.5 3M98.500 102c1.500-2 4 0 2.200 2l-2.200 3h3.500M106 101l1.800 6 1.800-6M112 101v6M114.500 101v6c3.500 0 3.500-6 0-6M119 107l1.800-6 1.800 6M127 101c-3 0-3 3-.5 3s2.500 3-.5 3" stroke="#1a2848" stroke-width="1.100" fill="none" transform="translate(0,0)"/>
<path d="M70 100.500l5 1.500M69 104h5.500M70 107.500l5-1.500M134 100.500l-5 1.500M135 104h-5.500M134 107.500l-5-1.500" stroke="#1a2848" stroke-width="1"/>
<!-- hands -->
<path d="M2 66c4-6 14-6 20-2l8 12c2 8-2 16-8 22l-16 4c-6-10-8-26-4-36z" fill="#a3745c"/><path d="M6 76l14-2M6 82l16-2M8 88l14-2" stroke="#7a5442" stroke-width="1"/>
<path d="M199 62c6-4 14-2 18 4 2 8 0 18-6 24l-14 10-6-12 4-14z" fill="#ab7c64"/><path d="M202 68l12 2M200 74l14 2" stroke="#7a5442" stroke-width="1"/>
</g></svg>
<svg class="a" style="left:437px;top:379px" width="113" height="87" viewBox="0 0 113 87"><defs><filter id="blg" x="-5%" y="-5%" width="110%" height="110%"><feGaussianBlur stdDeviation=".55"/></filter></defs><g filter="url(#blg)"><rect x="-3" y="-3" width="119" height="93" fill="#2b3a30"/><path d="M36.2 45.1L64.9 43.7L50.6 53.7z" fill="#2a9256"/><path d="M82.6 34.7L106.4 40.5L93.8 44.9z" fill="#2c8c54"/><path d="M104.8 83.4L128.7 82.9L111.0 90.3z" fill="#2f9a5e"/><path d="M-14.8 72.2L11.7 77.1L-0.5 82.9z" fill="#46b276"/><path d="M61.7 42.9L86.3 34.9L71.4 48.1z" fill="#3aa86a"/><path d="M73.6 24.4L91.3 20.2L77.3 30.3z" fill="#52b880"/><path d="M-0.1 18.7L15.0 23.3L9.7 27.1z" fill="#2f9a5e"/><path d="M-6.0 55.9L12.3 48.5L1.1 58.8z" fill="#3aa86a"/><path d="M39.7 42.5L64.6 34.7L52.2 45.9z" fill="#2a9256"/><path d="M36.2 29.1L56.6 23.3L40.4 39.2z" fill="#3fae70"/><path d="M110.2 -7.0L127.2 -8.3L120.0 5.3z" fill="#2f9a5e"/><path d="M108.6 9.5L126.7 12.8L115.6 22.5z" fill="#3aa86a"/><path d="M-8.8 14.3L15.4 12.4L1.7 19.5z" fill="#2a9256"/><path d="M102.3 33.2L125.5 38.7L110.1 48.0z" fill="#46b276"/><path d="M87.7 12.2L104.7 17.0L101.5 25.8z" fill="#52b880"/><path d="M-7.7 -5.2L21.7 -1.3L9.4 4.4z" fill="#5cc08a"/><path d="M17.9 10.5L43.4 9.6L27.4 16.6z" fill="#3aa86a"/><path d="M-14.5 17.8L6.6 19.9L-7.8 25.2z" fill="#2a9256"/><path d="M-5.1 5.9L16.1 5.5L8.3 14.0z" fill="#2a9256"/><path d="M57.9 79.6L77.6 78.0L62.1 87.0z" fill="#3aa86a"/><path d="M107.6 0.3L130.3 -3.5L123.7 9.6z" fill="#2a9256"/><path d="M69.3 75.6L90.0 74.4L84.0 86.5z" fill="#52b880"/><path d="M33.8 -7.1L49.0 -3.2L36.8 1.5z" fill="#52b880"/><path d="M72.1 30.8L97.9 25.4L84.3 38.2z" fill="#3aa86a"/><path d="M49.4 45.2L68.3 37.9L53.1 48.2z" fill="#3aa86a"/><path d="M47.1 52.5L65.2 49.7L53.8 57.2z" fill="#46b276"/><path d="M101.4 40.0L119.2 37.9L107.3 47.8z" fill="#46b276"/><path d="M92.4 28.6L115.7 28.7L99.7 36.9z" fill="#2f9a5e"/><path d="M5.9 36.2L24.3 34.2L14.1 42.7z" fill="#5cc08a"/><path d="M66.0 57.7L90.0 61.3L82.0 67.7z" fill="#2f9a5e"/><path d="M68.9 19.0L88.6 16.7L79.6 28.4z" fill="#52b880"/><path d="M37.2 -8.2L64.5 -0.9L46.5 3.1z" fill="#3aa86a"/><path d="M36.4 46.8L63.3 51.6L52.0 61.9z" fill="#5cc08a"/><path d="M14.7 62.5L37.3 58.1L22.7 66.5z" fill="#2c8c54"/><path d="M69.2 42.1L93.1 37.4L79.9 51.0z" fill="#46b276"/><path d="M-3.1 82.4L12.9 75.9L6.4 88.3z" fill="#52b880"/><path d="M49.2 57.4L76.3 49.6L60.7 61.9z" fill="#3aa86a"/><path d="M71.5 73.2L97.0 65.5L89.0 76.9z" fill="#3fae70"/><path d="M-7.1 28.5L15.7 36.1L4.2 43.7z" fill="#3aa86a"/><path d="M36.4 -5.4L58.9 -4.9L52.6 5.7z" fill="#2c8c54"/><path d="M94.1 41.3L119.0 40.0L111.1 49.7z" fill="#3aa86a"/><path d="M77.3 29.3L100.2 34.6L89.5 43.8z" fill="#2c8c54"/><path d="M90.0 47.9L108.9 41.5L103.6 53.4z" fill="#46b276"/><path d="M20.7 5.5L43.4 6.9L32.0 14.1z" fill="#3aa86a"/><path d="M105.0 39.1L125.4 39.3L115.9 50.8z" fill="#2a9256"/><path d="M-8.1 38.9L12.5 42.6L7.3 53.4z" fill="#5cc08a"/><path d="M41.4 22.5L69.8 22.1L60.7 34.9z" fill="#3aa86a"/><path d="M9.9 46.3L26.0 51.2L12.2 60.2z" fill="#46b276"/><path d="M-17.3 19.6L8.3 19.6L-4.5 27.3z" fill="#3aa86a"/><path d="M87.9 50.0L113.1 47.8L94.8 61.1z" fill="#2c8c54"/><path d="M57.1 39.9L84.9 44.5L67.6 51.9z" fill="#2c8c54"/><path d="M77.1 66.0L96.1 70.5L91.7 76.5z" fill="#46b276"/><path d="M96.0 0.7L113.9 7.1L102.1 15.0z" fill="#52b880"/><path d="M51.7 27.1L78.8 24.9L67.7 34.5z" fill="#35a062"/><path d="M-4.5 2.5L10.1 1.4L3.0 11.8z" fill="#2a9256"/><path d="M9.3 5.5L26.1 2.8L15.1 11.2z" fill="#2f9a5e"/><path d="M-4.3 28.1L16.5 30.1L2.6 37.6z" fill="#2f9a5e"/><path d="M88.9 5.8L110.2 10.7L98.4 19.4z" fill="#2a9256"/><path d="M-9.7 66.5L18.9 71.5L5.4 81.6z" fill="#35a062"/><path d="M80.3 17.9L108.9 12.9L97.9 26.6z" fill="#52b880"/><path d="M-0.7 20.8L22.0 25.9L9.8 32.0z" fill="#46b276"/><path d="M74.6 -2.2L94.1 0.1L78.5 8.2z" fill="#2f9a5e"/><path d="M13.3 79.8L32.7 79.3L23.8 90.2z" fill="#52b880"/><path d="M49.6 40.5L67.0 39.3L57.1 46.7z" fill="#3aa86a"/><path d="M35.6 -4.6L52.8 -0.6L39.4 6.0z" fill="#35a062"/><path d="M48.0 40.3L77.5 38.1L68.7 49.2z" fill="#3aa86a"/><path d="M52.6 56.6L72.8 49.1L61.3 65.4z" fill="#5cc08a"/><path d="M45.6 19.2L66.0 19.5L56.2 27.5z" fill="#3fae70"/><path d="M51.3 17.3L76.8 21.4L58.2 27.4z" fill="#2f9a5e"/><path d="M60.6 31.0L85.6 32.7L70.9 38.2z" fill="#35a062"/><path d="M48.7 78.6L70.2 76.9L63.2 90.6z" fill="#3aa86a"/><path d="M-7.6 27.0L8.2 32.5L-1.4 41.8z" fill="#35a062"/><path d="M40.3 56.3L58.5 51.9L48.4 64.2z" fill="#2c8c54"/><path d="M86.6 6.3L105.2 6.3L95.7 13.2z" fill="#3fae70"/><path d="M16.2 53.0L39.7 58.0L31.0 65.9z" fill="#46b276"/><path d="M19.1 -2.2L33.7 -6.3L23.8 3.3z" fill="#2a9256"/><path d="M44.1 7.6L63.6 14.4L57.9 22.2z" fill="#3aa86a"/><path d="M36.8 68.0L63.1 69.8L52.9 78.0z" fill="#2a9256"/><path d="M30.5 56.2L49.7 49.5L43.1 62.7z" fill="#52b880"/><path d="M65.0 46.3L86.4 47.4L76.2 55.1z" fill="#5cc08a"/><path d="M82.3 40.4L109.5 33.8L93.6 43.1z" fill="#3aa86a"/><path d="M67.8 36.6L94.0 41.1L85.5 47.2z" fill="#35a062"/><path d="M27.1 6.4L52.5 -0.6L44.8 12.9z" fill="#3fae70"/><path d="M19.2 26.9L48.2 29.1L30.7 40.3z" fill="#35a062"/><path d="M-16.4 53.5L10.4 55.3L-4.6 65.5z" fill="#2a9256"/><path d="M90.1 41.9L107.0 45.4L103.1 55.0z" fill="#2f9a5e"/><path d="M13.4 1.1L29.9 -4.4L15.9 6.4z" fill="#52b880"/><path d="M-11.3 46.5L15.3 42.7L-3.0 51.1z" fill="#35a062"/><path d="M8.4 67.5L34.7 60.1L19.6 72.6z" fill="#2a9256"/><path d="M42.9 40.8L68.5 42.2L60.7 52.5z" fill="#35a062"/><path d="M86.6 65.8L114.8 65.4L102.4 78.3z" fill="#2f9a5e"/><path d="M83.9 36.6L104.6 28.8L97.2 39.7z" fill="#52b880"/><path d="M69.4 25.1L89.6 18.9L76.8 31.7z" fill="#5cc08a"/><path d="M20.4 -1.5L44.7 5.5L28.7 13.4z" fill="#5cc08a"/><path d="M-17.3 36.5L9.5 38.8L-7.5 45.8z" fill="#46b276"/><path d="M57.9 35.6L80.1 37.1L73.7 45.4z" fill="#3fae70"/><path d="M58.5 83.6L86.2 76.3L71.2 89.3z" fill="#2c8c54"/><path d="M76.6 -1.7L104.4 4.1L87.1 10.0z" fill="#52b880"/><path d="M102.7 70.8L129.3 64.6L121.1 74.1z" fill="#5cc08a"/><path d="M98.2 33.7L116.1 35.1L111.7 43.3z" fill="#35a062"/><path d="M4.0 76.0L20.1 75.7L13.5 87.0z" fill="#2f9a5e"/><path d="M89.0 68.5L104.3 75.0L99.3 79.6z" fill="#5cc08a"/><path d="M67.7 -4.0L93.7 3.7L80.8 9.6z" fill="#46b276"/><path d="M85.9 14.2L108.6 8.9L93.2 21.2z" fill="#3fae70"/><path d="M22.1 24.8L45.0 31.7L35.5 41.2z" fill="#3aa86a"/><path d="M69.7 4.9L90.0 -0.4L85.5 11.5z" fill="#5cc08a"/><path d="M-17.1 27.9L8.2 28.6L-3.7 35.9z" fill="#2f9a5e"/><path d="M86.8 75.5L115.2 68.5L102.5 79.1z" fill="#3fae70"/><path d="M105.6 60.4L121.0 66.7L111.8 70.9z" fill="#3fae70"/><path d="M99.3 41.9L124.9 48.4L116.1 53.5z" fill="#2a9256"/><path d="M59.7 1.9L83.8 9.3L68.0 12.9z" fill="#5cc08a"/><path d="M59.3 1.1L76.9 2.6L63.6 8.9z" fill="#3aa86a"/><path d="M28.6 71.4L44.8 68.3L32.5 77.3z" fill="#5cc08a"/><path d="M28.3 34.8L42.5 27.1L37.8 39.7z" fill="#46b276"/><path d="M23.2 25.5L47.6 25.4L33.9 32.2z" fill="#3fae70"/><path d="M80.0 77.9L99.6 74.5L85.5 85.7z" fill="#2c8c54"/><path d="M107.3 61.9L130.3 57.4L120.7 65.8z" fill="#2a9256"/><path d="M12.0 45.4L37.2 47.6L29.7 54.8z" fill="#5cc08a"/><path d="M91.5 35.6L117.2 34.9L105.2 42.9z" fill="#3aa86a"/><path d="M49.8 15.9L78.3 14.3L67.9 28.1z" fill="#3aa86a"/><path d="M98.3 -8.0L123.2 -5.8L113.8 1.6z" fill="#2a9256"/><path d="M9.6 48.7L24.8 40.9L13.4 51.1z" fill="#2a9256"/><path d="M22.4 50.5L42.5 58.2L36.1 64.5z" fill="#46b276"/><path d="M34.3 -4.6L56.7 -2.0L44.4 3.5z" fill="#2a9256"/><path d="M17.3 45.9L36.6 43.2L21.4 55.1z" fill="#2a9256"/><path d="M36.6 42.4L52.2 35.8L49.2 47.5z" fill="#52b880"/><path d="M73.0 35.5L102.9 37.0L92.2 48.1z" fill="#52b880"/><path d="M-5.8 2.9L23.2 4.1L8.9 11.8z" fill="#2f9a5e"/><path d="M21.3 -3.3L46.9 -4.8L36.9 8.2z" fill="#3fae70"/><path d="M85.6 10.0L113.5 16.3L99.3 25.9z" fill="#46b276"/><path d="M48.1 54.6L76.2 48.6L64.9 64.6z" fill="#35a062"/><path d="M88.9 32.9L115.8 31.9L105.3 40.0z" fill="#3aa86a"/><path d="M14.9 24.1L34.1 19.1L29.2 28.1z" fill="#52b880"/><rect x="34.6" y="39.6" width="2.9" height="4.0" fill="#201c18"/><rect x="105.5" y="85.0" width="4.6" height="2.8" fill="#2c2820"/><rect x="97.1" y="60.2" width="2.6" height="5.4" fill="#1e1e1a"/><rect x="40.0" y="41.1" width="3.9" height="4.8" fill="#c8a890"/><rect x="63.3" y="46.4" width="2.6" height="5.5" fill="#1a1a18"/><rect x="5.7" y="9.2" width="4.9" height="3.1" fill="#201c18"/><rect x="47.5" y="76.5" width="4.1" height="5.8" fill="#201c18"/><rect x="50.3" y="6.9" width="4.6" height="2.5" fill="#1a1a18"/><rect x="78.1" y="23.4" width="3.5" height="3.2" fill="#1a1a18"/><rect x="30.9" y="69.9" width="3.8" height="2.9" fill="#2a241e"/><rect x="34.0" y="80.6" width="2.8" height="4.6" fill="#1a1a18"/><rect x="10.2" y="85.5" width="4.8" height="2.3" fill="#2c2820"/><rect x="102.5" y="0.6" width="3.6" height="3.7" fill="#8a6a58"/><rect x="64.2" y="14.3" width="2.7" height="3.1" fill="#1a1a18"/><rect x="61.9" y="16.2" width="5.0" height="2.1" fill="#c8a890"/><rect x="52.2" y="65.3" width="2.0" height="5.6" fill="#d8c8b8"/><rect x="6.8" y="5.6" width="3.0" height="3.9" fill="#201c18"/><rect x="3.6" y="25.4" width="3.8" height="5.1" fill="#c8a890"/><rect x="12.7" y="37.9" width="3.6" height="3.0" fill="#2c2820"/><rect x="80.9" y="62.8" width="3.5" height="2.9" fill="#8a6a58"/><rect x="65.6" y="43.4" width="2.6" height="5.9" fill="#1e1e1a"/><rect x="5.9" y="39.0" width="3.0" height="4.4" fill="#c8a890"/><rect x="68.8" y="70.1" width="4.2" height="5.4" fill="#2c2820"/><rect x="3.5" y="9.9" width="3.7" height="4.2" fill="#c8a890"/><rect x="89.5" y="20.7" width="2.2" height="3.7" fill="#c8a890"/><rect x="78.6" y="71.3" width="4.3" height="4.0" fill="#8a6a58"/><rect x="73.5" y="44.4" width="2.8" height="2.6" fill="#d8c8b8"/><rect x="78.0" y="72.3" width="2.2" height="3.6" fill="#2c2820"/><rect x="41.2" y="18.8" width="2.4" height="5.0" fill="#1e1e1a"/><rect x="67.9" y="11.7" width="3.6" height="5.9" fill="#2c2820"/><rect x="0.4" y="35.7" width="2.3" height="4.2" fill="#c8a890"/><rect x="53.3" y="81.4" width="4.0" height="4.9" fill="#1e1e1a"/><rect x="110.3" y="53.3" width="2.8" height="4.2" fill="#8a6a58"/><rect x="27.3" y="40.2" width="3.1" height="3.3" fill="#1a1a18"/><rect x="110.9" y="53.1" width="2.5" height="4.3" fill="#1e1e1a"/><rect x="112.4" y="64.2" width="3.4" height="3.6" fill="#c8a890"/><rect x="95.3" y="33.2" width="2.6" height="3.4" fill="#1e1e1a"/><rect x="20.7" y="47.8" width="3.4" height="3.6" fill="#c8a890"/><rect x="67.1" y="66.1" width="3.3" height="6.0" fill="#2c2820"/><rect x="76.7" y="75.1" width="3.6" height="3.7" fill="#1a1a18"/><rect x="5.3" y="24.1" width="3.9" height="4.1" fill="#8a6a58"/><rect x="83.8" y="44.6" width="2.8" height="3.4" fill="#1a1a18"/><rect x="17.3" y="81.5" width="2.4" height="3.0" fill="#201c18"/><rect x="94.8" y="10.4" width="4.5" height="3.8" fill="#201c18"/><rect x="96.6" y="33.2" width="4.3" height="4.1" fill="#8a6a58"/><rect x="6.2" y="34.3" width="3.5" height="2.8" fill="#1a1a18"/><rect x="58.1" y="11.1" width="2.9" height="3.7" fill="#1a1a18"/><rect x="61.5" y="11.8" width="2.9" height="3.8" fill="#8a6a58"/><rect x="42.6" y="76.6" width="3.6" height="3.8" fill="#8a6a58"/><rect x="15.4" y="45.0" width="2.7" height="3.2" fill="#201c18"/><rect x="39.0" y="18.8" width="4.5" height="5.0" fill="#1e1e1a"/><rect x="54.6" y="1.0" width="4.0" height="2.3" fill="#8a6a58"/><rect x="96.4" y="48.6" width="4.0" height="5.8" fill="#201c18"/><rect x="98.1" y="20.4" width="2.3" height="3.7" fill="#8a6a58"/><rect x="44.3" y="5.2" width="4.8" height="3.1" fill="#d8c8b8"/><rect x="79.5" y="19.3" width="2.6" height="5.1" fill="#d8c8b8"/><rect x="39.6" y="62.0" width="4.2" height="5.6" fill="#2a241e"/><rect x="90.9" y="41.6" width="4.1" height="4.2" fill="#8a6a58"/><rect x="79.1" y="2.0" width="2.4" height="5.6" fill="#d8c8b8"/><rect x="103.1" y="23.7" width="3.5" height="4.3" fill="#d8c8b8"/><rect x="53.0" y="28.3" width="2.2" height="2.1" fill="#8a6a58"/><rect x="36.6" y="32.5" width="2.8" height="4.7" fill="#8a6a58"/><rect x="21.0" y="40.8" width="4.9" height="3.5" fill="#201c18"/><rect x="65.1" y="82.0" width="3.9" height="4.5" fill="#2a241e"/><rect x="46.4" y="36.2" width="2.2" height="3.9" fill="#8a6a58"/><rect x="50.8" y="84.1" width="2.1" height="2.5" fill="#d8c8b8"/><rect x="57.3" y="26.8" width="3.4" height="2.1" fill="#201c18"/><rect x="68.4" y="23.5" width="4.0" height="2.9" fill="#8a6a58"/><rect x="0.1" y="47.3" width="2.0" height="4.2" fill="#d8c8b8"/><rect x="95.9" y="66.6" width="3.9" height="4.2" fill="#2a241e"/><ellipse cx="83" cy="58" rx="7" ry="5" fill="#e8e4d8"/><circle cx="83" cy="57" r="3" fill="#c8c0a8"/><path d="M62 67l18 2-2 18H64z" fill="#dfe8d8"/><circle cx="95.500" cy="73" r="4.500" fill="#e8f0f4"/><circle cx="95.500" cy="73" r="2.800" fill="#2a78c0"/><path d="M70 50l7-4 3 14-8 4z" fill="#e8e8e4"/><path d="M0 48c8-4 12 0 14 8l2 18-10 6-6-4z" fill="#3aa86a"/><path d="M86 68l27-10v20l-20 9z" fill="#35a062"/><path d="M50 84l28-14 2 17z" fill="#2f9a5e"/></g></svg>
<svg class="a" style="left:550.500px;top:379px" width="113.500" height="87" viewBox="0 0 114 87">
<rect width="114" height="87" fill="#f2f0a2"/>
<path d="M55 9c10-3 18-1 22 5 6-1 9 6 9 14 1 8 0 14 0 20 0 12 0 26 1 39H25c2-10 3-22 2-34-1-14 1-27 9-35 5-5 11-8 19-9z" fill="#8b3a1d" stroke="#150c08" stroke-width="1.600"/>
<path d="M40 86c2-8 8-14 18-14s16 6 18 14z" fill="#f5e6c2"/>
<path d="M40 38c0-6 8-10 18-10s17 4 17 10c1 8-1 16-5 22-3 5-8 8-12 8s-10-3-13-8c-4-6-6-14-5-22z" fill="#f6e7c3" stroke="#150c08" stroke-width="1.200"/>
<path d="M38 40c-4-14 6-26 18-24 8 1 12 6 12 6-8 0-14 2-18 6-4 3-7 8-12 12z" fill="#8b3a1d"/>
<path d="M66 22c8 0 12 8 10 18-2-6-6-10-12-12z" fill="#8b3a1d"/>
<circle cx="48" cy="41" r="7.800" fill="#f6e7c3" stroke="#150c08" stroke-width="2"/><circle cx="68" cy="40" r="7.800" fill="#f6e7c3" stroke="#150c08" stroke-width="2"/><path d="M55.500 40h5" stroke="#150c08" stroke-width="2"/>
<path d="M43 40h9M64 39h9" stroke="#150c08" stroke-width="1.300"/><path d="M44 41c2 2 5 2 7 0M65 40c2 2 5 2 7 0" fill="#6a3a2a"/>
<path d="M53 55c2-2 6-2 9 0-1 3-7 3-9 0z" fill="#6f6f6a" stroke="#150c08" stroke-width=".8"/><path d="M56 50h3" stroke="#b08a6a" stroke-width=".8"/>
<path d="M38 46v6M78 44v6" stroke="#d8d8d0" stroke-width="2"/>
<path d="M49 66h18v21H49z" fill="#f5e6c2"/><path d="M50 82c3 3 12 3 16 0l1 5H49z" fill="#c9962a"/>
<path d="M24 87c2-8 8-14 18-20l8 4-6 8 4 8zM90 87c-2-8-6-14-16-20l-8 4 6 8-4 8z" fill="#1d6a38" stroke="#0c1a10" stroke-width="1.400"/>
<path d="M32 82l10 2M84 82l-10 2" stroke="#0c1a10" stroke-width="1.200"/>
</svg>
<!-- RIGHT PANEL -->
<div class="a" style="left:776px;top:86px;width:218px;height:380px;background:#202124"></div>
<!-- tile 1 -->
<svg class="a" style="left:776px;top:86px" width="218" height="112.500" viewBox="0 0 218 112.500">
<defs><filter id="bl1" x="-5%" y="-5%" width="110%" height="110%"><feGaussianBlur stdDeviation="1.100"/></filter>
<linearGradient id="cur" x1="0" y1="0" x2="1" y2="0"><stop offset="0" stop-color="#b9b7b7"/><stop offset=".12" stop-color="#d6d4d4"/><stop offset=".24" stop-color="#b3b1b2"/><stop offset=".36" stop-color="#d9d7d7"/><stop offset=".5" stop-color="#bcbabb"/><stop offset=".64" stop-color="#dddbdb"/><stop offset=".78" stop-color="#c0bebf"/><stop offset=".9" stop-color="#d3d1d1"/><stop offset="1" stop-color="#a9a7a8"/></linearGradient>
<radialGradient id="fc1" cx=".5" cy=".45" r=".6"><stop offset="0" stop-color="#d3a98e"/><stop offset=".6" stop-color="#c0957b"/><stop offset="1" stop-color="#9c7460"/></radialGradient><linearGradient id="lab1" x1="0" y1="0" x2="0" y2="1"><stop offset="0" stop-color="#000" stop-opacity="0"/><stop offset="1" stop-color="#000" stop-opacity=".3"/></linearGradient></defs>
<g filter="url(#bl1)">
<rect x="-5" y="-5" width="228" height="123" fill="#e4e2e1"/>
<rect x="0" y="0" width="62" height="113" fill="#e9e8e8"/>
<rect x="56" y="0" width="30" height="113" fill="#d9d4cc"/>
<path d="M31 113V22L20 8 8 0h8l14 10 4-10h7l-3 14 6-8 5 2-8 14v91z" fill="#b48f60"/>
<path d="M40 4l8-4h6l-2 10 6 6-2 10-8 4-4-10zM2 2l8-2 2 6-8 2z" fill="#7fae62"/><circle cx="50" cy="14" r="5" fill="#6fa455"/><circle cx="9" cy="6" r="3" fill="#e2d24a"/>
<path d="M21 38v50" stroke="#4a78c2" stroke-width="2.200"/>
<path d="M5 30c6-6 10 4 6 12s-8 14-2 22 10 2 8 12" stroke="#c8c4c4" stroke-width="1.500" fill="none"/>
<rect x="43" y="36" width="12" height="40" fill="#efeeee"/>
<rect x="59" y="0" width="26" height="18" fill="#5a9fd0"/><circle cx="77" cy="7" r="4" fill="#ecd84a"/><rect x="59" y="10" width="12" height="8" fill="#5aa860"/>
<rect x="60" y="20" width="20" height="8" fill="#d98a2a"/><rect x="62" y="30" width="16" height="14" fill="#8f9295"/><rect x="61" y="46" width="18" height="8" fill="#e8e4de"/><rect x="64" y="54" width="4" height="22" fill="#e2c43a"/><rect x="70" y="56" width="10" height="18" fill="#cfc8bc"/>
<rect x="140" y="0" width="12" height="113" fill="#d6d2cf"/>
<rect x="150" y="0" width="68" height="113" fill="url(#cur)"/>
<rect x="148.500" y="0" width="4.500" height="70" fill="#4b4949"/><rect x="209" y="0" width="3" height="113" fill="#8e8c8d"/>
<!-- hoodie -->
<path d="M22 113c6-14 20-26 40-34l22-12h46l24 10c20 8 30 22 36 36z" fill="#3a2225"/>
<path d="M84 68c8 10 36 10 46 0l6 10c-14 14-44 14-58 0z" fill="#4a2c30"/>
<!-- neck & face -->
<path d="M92 62h32v16c-8 8-24 8-32 0z" fill="#a97c63"/>
<path d="M84 28c0-14 12-20 24-20s24 6 24 20v22c0 18-12 32-24 32S84 68 84 50z" fill="url(#fc1)"/>
<path d="M96 66c6 3 18 3 24 0" stroke="#8f5e50" stroke-width="2" fill="none"/>
<path d="M91 36c4-2 9-2 13 0M113 36c4-2 9-2 13 0" stroke="#2a1c18" stroke-width="2.500" fill="none"/><path d="M93 41c3 1.500 7 1.500 10 0M115 41c3 1.500 7 1.500 10 0" stroke="#2a1c18" stroke-width="2.200" fill="none"/><path d="M104 56h10" stroke="#9a6e58" stroke-width="2"/>
<!-- hair -->
<path d="M77 34c-5-24 8-38 33-37 22 0 36 10 33 37-2-8-5-13-10-16-4 4-10 7-18 7-10 0-20 0-28-6-5 4-8 9-10 15z" fill="#1b191b"/><path d="M84 30c0 14 0 28 6 40M132 30c0 14 0 28-6 40" stroke="#9a7460" stroke-width="5" fill="none" opacity=".55"/>
<!-- headphones -->
<path d="M80 32c2-22 20-32 36-30 14 2 24 12 24 34" stroke="#19181a" stroke-width="3" fill="none"/>
<rect x="75.500" y="30" width="9.500" height="25" rx="4" fill="#1a191b"/><rect x="130.500" y="38" width="10" height="23" rx="4" fill="#1a191b"/>
<path d="M82 54c0 8 2 14 6 18" stroke="#1a191b" stroke-width="1.200" fill="none"/>
</g>
<rect y="72" width="218" height="41" fill="url(#lab1)"/>
</svg>
<!-- tile 2 -->
<svg class="a" style="left:776px;top:198px" width="218" height="112" viewBox="0 0 218 112">
<defs><filter id="bl2" x="-5%" y="-5%" width="110%" height="110%"><feGaussianBlur stdDeviation="1.800"/></filter></defs>
<g filter="url(#bl2)">
<rect x="-6" y="-6" width="230" height="124" fill="#c8c5b1"/>
<rect x="-6" y="-6" width="60" height="40" fill="#d0d2cc"/><circle cx="20" cy="8" r="16" fill="#a9b7c0"/><circle cx="20" cy="8" r="8" fill="#c8c0a0"/>
<rect x="50" y="-6" width="20" height="48" fill="#8b9279"/><circle cx="66" cy="5" r="8" fill="#dcc040"/><rect x="58" y="16" width="10" height="14" fill="#5c8f52"/>
<rect x="160" y="-6" width="64" height="124" fill="#bdb9a4"/><rect x="198" y="-6" width="26" height="40" fill="#8a7b69"/><rect x="170" y="40" width="40" height="40" fill="#cac6b4"/>
<rect x="-6" y="84" width="60" height="34" fill="#8e8c7e"/><rect x="186" y="80" width="40" height="38" fill="#98947f"/>
<!-- hair -->
<path d="M68 42c-5-26 10-50 46-50 32 0 50 20 52 48 2 24 2 44-4 62l-26-4 4-38H84c-8-4-13-10-16-18z" fill="#1c1714"/>
<!-- shirt -->
<path d="M44 118c2-24 8-46 24-60l26-8h34l26 10c22 8 30 30 34 58z" fill="#e9cbd0"/>
<path d="M96 54l16 30 18-30z" fill="#bf8c70"/><path d="M86 56l24 32-20-4zM138 56l-26 32 22-6z" fill="#dfbcc2"/>
<!-- face -->
<path d="M84 16c0-18 12-26 29-26s31 8 31 26v12c0 22-16 36-31 36S84 50 84 28z" fill="#c18d6f"/>
<path d="M98 44c8 6 22 6 30 0-2 8-28 8-30 0z" fill="#f2ebe4"/>
<path d="M86 10h26v16H88zM116 8h26l-2 18h-22z" fill="none" stroke="#3a2420" stroke-width="2.200"/><path d="M112 14h4" stroke="#3a2420" stroke-width="2"/>
<path d="M136 104c6-14 8-30 6-50l22 2c3 20 0 36-6 50z" fill="#1c1714"/>
</g>
<rect y="70" width="218" height="42" fill="url(#lab1)"/>
</svg>
<!-- tile 3 -->
<div class="a" style="left:776px;top:309px;width:218px;height:110px;background:#202124"></div>
<div class="a" style="left:852px;top:331px;width:66px;height:66px;border-radius:50%;background:#ec407a"></div>
<div class="t" style="left:874.5px;top:347.00px;font-size:34px;color:#fff;transform:scaleX(0.9260);">S</div>
<!-- tile 4 -->
<svg class="a" style="left:776px;top:418.500px" width="218" height="47.500" viewBox="0 0 218 47.500">
<defs><filter id="bl4" x="-5%" y="-5%" width="110%" height="110%"><feGaussianBlur stdDeviation="1.300"/></filter></defs>
<g filter="url(#bl4)">
<rect x="-5" y="-5" width="228" height="58" fill="#d9dad6"/>
<rect x="-5" y="-5" width="40" height="58" fill="#cfd2d0"/><rect x="150" y="-5" width="52" height="58" fill="#e2e2de"/>
<rect x="201" y="-5" width="22" height="58" fill="#6b5a42"/><rect x="201" y="-5" width="22" height="14" fill="#8a5a4a"/>
<path d="M68 53c0-34 14-54 54-54 36 0 48 22 50 54z" fill="#141214"/>
<path d="M84 53c2-16 12-24 36-26 22 0 32 10 34 26z" fill="#a1694b"/>
<path d="M96 44c4-2 10-2 14 0M126 44c4-2 10-2 14 0" stroke="#3a2218" stroke-width="2.500" fill="none"/>
</g></svg>
<!-- labels -->
<div class="a" style="left:781.500px;top:173.500px;width:18.500px;height:18.500px;border-radius:50%;background:#d93025"></div>
<div class="a" style="left:781.500px;top:284px;width:18.500px;height:18.500px;border-radius:50%;background:#d93025"></div>
<div class="a" style="left:781.500px;top:395.500px;width:18.500px;height:18.500px;border-radius:50%;background:#d93025"></div>
<svg class="a" style="left:785px;top:177px" width="12" height="12" viewBox="0 0 12 12"><rect x="4.500" y="1.500" width="3" height="5.500" rx="1.500" fill="#fff"/><path d="M2.800 5.500a3.200 3.200 0 0 0 6.400 0M6 8.700v2" stroke="#fff" stroke-width=".9" fill="none"/><path d="M1.800 1.500l8.500 9" stroke="#d93025" stroke-width="2"/><path d="M1.800 1.500l8.500 9" stroke="#fff" stroke-width=".9"/></svg>
<svg class="a" style="left:785px;top:287.500px" width="12" height="12" viewBox="0 0 12 12"><rect x="4.500" y="1.500" width="3" height="5.500" rx="1.500" fill="#fff"/><path d="M2.800 5.500a3.200 3.200 0 0 0 6.400 0M6 8.700v2" stroke="#fff" stroke-width=".9" fill="none"/><path d="M1.800 1.500l8.500 9" stroke="#d93025" stroke-width="2"/><path d="M1.800 1.500l8.500 9" stroke="#fff" stroke-width=".9"/></svg>
<svg class="a" style="left:785px;top:399px" width="12" height="12" viewBox="0 0 12 12"><rect x="4.500" y="1.500" width="3" height="5.500" rx="1.500" fill="#fff"/><path d="M2.800 5.500a3.200 3.200 0 0 0 6.400 0M6 8.700v2" stroke="#fff" stroke-width=".9" fill="none"/><path d="M1.800 1.500l8.500 9" stroke="#d93025" stroke-width="2"/><path d="M1.800 1.500l8.500 9" stroke="#fff" stroke-width=".9"/></svg>
<div class="t" style="left:806.3px;top:178.00px;font-size:10.0943px;color:#fff;font-weight:bold;transform:scaleX(0.9500);text-shadow:0 0 2px rgba(0">Sebastián Vega Huaccha</div>
<div class="t" style="left:806.3px;top:289.00px;font-size:9.73752px;color:#fff;font-weight:bold;transform:scaleX(0.9500);text-shadow:0 0 2px rgba(0">Giane Rodriguez</div>
<div class="t" style="left:806.3px;top:400.00px;font-size:10.0426px;color:#fff;font-weight:bold;transform:scaleX(0.9500);">Sebastián Vega</div>
<!-- Tú thumbnail -->
<svg class="a" style="left:931.500px;top:51.500px" width="62.500" height="35" viewBox="0 0 62.500 35">
<defs><filter id="bl5" x="-5%" y="-5%" width="110%" height="110%"><feGaussianBlur stdDeviation=".8"/></filter></defs>
<g filter="url(#bl5)"><rect x="-3" y="-3" width="70" height="42" fill="#8b9189"/>
<rect x="-3" y="-3" width="20" height="22" fill="#9a90b2"/><rect x="1" y="-3" width="14" height="7" fill="#b8a488"/><rect x="-3" y="19" width="20" height="20" fill="#5c5c5a"/>
<rect x="36" y="-3" width="12" height="17" fill="#b89a50"/><rect x="38" y="2" width="6" height="8" fill="#6a80a8"/>
<rect x="54.500" y="-3" width="5" height="42" fill="#2a2628"/><rect x="59.500" y="-3" width="8" height="42" fill="#8c8c92"/>
<path d="M14 38c0-10 6-16 17-16s17 6 17 16z" fill="#5a2029"/><path d="M13 38v-10l4-3v13zM49 38v-10l-4-3v13z" fill="#c8c0c8"/>
<path d="M22 38c0-10 3-16 9-16s9 6 9 16z" fill="#171317"/>
<ellipse cx="31" cy="13" rx="7.200" ry="9.500" fill="#b38c79"/><path d="M23 9c-1-8 3-11 8-11s9 3 8 11c-2-3-5-5-8-5s-6 2-8 5z" fill="#3a3442"/>
<path d="M25 11.500h5M32.500 11.500h5" stroke="#3a2a2a" stroke-width="1.800"/><path d="M29 19h4" stroke="#8a5a50" stroke-width="1"/></g>
<rect y="20" width="62.500" height="15" fill="url(#lab1)"/>
</svg>
<div class="t" style="left:934.2px;top:76.00px;font-size:8.2px;color:#fff;font-weight:bold;transform:scaleX(0.9483);">Tú</div>
<div class="a" style="left:980.200px;top:73.100px;width:11.800px;height:11.800px;border-radius:50%;background:#e0372b"></div>
<svg class="a" style="left:982.100px;top:75px" width="8" height="8" viewBox="0 0 12 12"><rect x="4.500" y="1.500" width="3" height="5.500" rx="1.500" fill="#fff"/><path d="M2.800 5.500a3.200 3.200 0 0 0 6.400 0M6 8.700v2" stroke="#fff" stroke-width=".9" fill="none"/><path d="M1.800 1.500l8.500 9" stroke="#d93025" stroke-width="2"/><path d="M1.800 1.500l8.500 9" stroke="#fff" stroke-width=".9"/></svg>
<!-- BOTTOM BAR -->
<div class="a" style="left:0;top:466px;width:994px;height:64px;background:#fff"></div>
<div class="t" style="left:18px;top:491.00px;font-size:13.3px;color:#3c4043;transform:scaleX(0.9677);">Detalles de la reunión</div>
<svg class="a" style="left:151.500px;top:493px" width="12" height="8" viewBox="0 0 12 8"><path d="M1.500 6.500L6 2l4.500 4.500" stroke="#5f6368" stroke-width="1.500" fill="none"/></svg>
<div class="a" style="left:424px;top:477.500px;width:40.500px;height:40.500px;border-radius:50%;background:#d93025"></div>
<svg class="a" style="left:435px;top:488px" width="19" height="19" viewBox="0 0 19 19"><rect x="7.300" y="3" width="4.400" height="8" rx="2.200" fill="#fff"/><path d="M4.700 9a4.800 4.800 0 0 0 9.600 0M9.500 13.800v2.700" stroke="#fff" stroke-width="1.300" fill="none"/><path d="M3.500 3l12.500 13" stroke="#d93025" stroke-width="3"/><path d="M3.500 3l12.500 13" stroke="#fff" stroke-width="1.300"/></svg>
<div class="a" style="left:477px;top:477.500px;width:40.500px;height:40.500px;border-radius:50%;background:#fff;border:1px solid #dadce0"></div>
<svg class="a" style="left:487px;top:492px" width="20" height="10" viewBox="0 0 20 10"><path d="M1.500 7.500c-1-1.500-.6-2.700.6-3.500C4.500 2.600 7.200 2 10 2s5.500.6 7.900 2c1.200.8 1.600 2 .6 3.500l-1 .8c-.5.400-1.100.4-1.600 0l-1.700-1.200c-.5-.4-.7-.9-.6-1.500l.1-.9c-1.200-.4-2.400-.6-3.700-.6s-2.500.2-3.700.6l.1.900c.1.600-.1 1.100-.6 1.500L4.100 8.300c-.5.400-1.100.4-1.600 0z" fill="#d93025"/></svg>
<div class="a" style="left:529px;top:477.500px;width:40.500px;height:40.500px;border-radius:50%;background:#fff;border:1px solid #dadce0"></div>
<svg class="a" style="left:541px;top:491px" width="17" height="13" viewBox="0 0 17 13"><rect x="1.500" y="1.500" width="9.500" height="10" rx="1" fill="none" stroke="#5f6368" stroke-width="1.600"/><path d="M11.500 5l4-3v9l-4-3z" fill="#5f6368"/></svg>
<svg class="a" style="left:885px;top:476.500px" width="16" height="13" viewBox="0 0 16 13"><rect x="1" y="1" width="14" height="11" rx="1.200" fill="none" stroke="#00796b" stroke-width="1.300"/><path d="M8 3.500l3.200 3.200H9.200v2.800H6.800V6.700H4.800z" fill="#00796b"/></svg>
<div class="t" style="left:840px;top:495.00px;font-size:10.5px;color:#3c4043;transform:scaleX(0.9074);">Sebastián Vega Huaccha</div>
<div class="t" style="left:855px;top:508.00px;font-size:10.5px;color:#3c4043;transform:scaleX(0.9304);">está presentando</div>
<svg class="a" style="left:969.500px;top:490.500px" width="5" height="15" viewBox="0 0 5 15"><circle cx="2.500" cy="2" r="1.600" fill="#5f6368"/><circle cx="2.500" cy="7.500" r="1.600" fill="#5f6368"/><circle cx="2.500" cy="13" r="1.600" fill="#5f6368"/></svg>
<!-- TASKBAR -->
<div class="a" style="left:0;top:530px;width:994px;height:28.500px;background:#2a201c"></div>
<div class="a" style="left:35px;top:530px;width:250px;height:28.500px;background:#f2f2f2;border-top:1px solid #d9d9d9"></div>
<svg class="a" style="left:11.500px;top:538.500px" width="12" height="12" viewBox="0 0 12 12"><path d="M0 1.700L5 1v4.700H0zM5.700.900L12 0v5.700H5.700zM0 6.400h5V11l-5-.7zM5.700 6.400H12V12l-6.300-.900z" fill="#fff"/></svg>
<svg class="a" style="left:44px;top:538px" width="12" height="12" viewBox="0 0 12 12"><circle cx="7.300" cy="4.700" r="3.700" fill="none" stroke="#222" stroke-width="1.100"/><path d="M4.700 7.300L.800 11.200" stroke="#222" stroke-width="1.200"/></svg>
<div class="t" style="left:64.7px;top:539.00px;font-size:10.8px;color:#2b2b2b;transform:scaleX(0.9686);">Escribe aquí para buscar</div>
<!-- task view -->
<svg class="a" style="left:296px;top:538px" width="13" height="12" viewBox="0 0 13 12"><rect x="1" y="2.500" width="7" height="7" fill="none" stroke="#fff" stroke-width="1"/><path d="M1 .500h7M1 11.500h7M10.500 1v3M10.500 5.500v5.500" stroke="#fff" stroke-width="1"/><rect x="9.800" y="4" width="1.400" height="1.500" fill="#fff"/></svg>
<!-- explorer -->
<svg class="a" style="left:331.500px;top:536px" width="16" height="15" viewBox="0 0 16 15"><path d="M.5 2h5.500l1.500 1.500h8v2H.5z" fill="#e8a920"/><rect x=".5" y="4.500" width="15" height="9.500" fill="#f7d160"/><rect x="3.500" y="9.500" width="9" height="4.500" fill="#3f8fd8"/><rect x="5.500" y="11.500" width="5" height="2.500" fill="#f7d160"/></svg>
<!-- edge -->
<svg class="a" style="left:367px;top:535.500px" width="16" height="16" viewBox="0 0 16 16"><circle cx="8" cy="8" r="7.500" fill="#1a80d4"/><path d="M.6 9C.6 4 4 .500 8 .500s7.400 3 7.400 6.500c0 2-1.500 3.500-3.500 3.500-1.500 0-2.500-.8-2.500-1.800 0-1 .8-1 .8-2 0-1.200-1.200-2-2.700-2C4.500 4.700 2 6.500.600 9z" fill="#35c0e8"/><path d="M3 12c2 3.500 7.500 4.500 11 1-2 1-5.500.5-7-1.500-1.200-1.700-1-3.500 0-4.500-2.500.5-4.500 2.500-4 5z" fill="#1558b0"/><path d="M2 11c1.500 4 6 5 9 4-3 0-5.500-1.500-6.500-4z" fill="#3ad07a"/></svg>
<!-- store -->
<svg class="a" style="left:401.500px;top:535.500px" width="15" height="16" viewBox="0 0 15 16"><path d="M4.500 4V2.500a3 3 0 0 1 6 0V4" fill="none" stroke="#f3f3f3" stroke-width="1.200"/><rect x=".5" y="4" width="14" height="11.500" fill="#f3f3f3"/><rect x="4" y="6.500" width="3" height="3" fill="#f05022"/><rect x="8" y="6.500" width="3" height="3" fill="#7fba00"/><rect x="4" y="10.500" width="3" height="3" fill="#00a4ef"/><rect x="8" y="10.500" width="3" height="3" fill="#ffb900"/></svg>
<!-- mail -->
<svg class="a" style="left:438px;top:537px" width="17" height="13" viewBox="0 0 17 13"><rect x=".5" y="2.500" width="16" height="10" fill="#1f8fe0"/><path d="M.5 2.500L8.500 0l8 2.500-8 6z" fill="#dff0fc"/><path d="M.5 3.500l8 6 8-6v9H.5z" fill="#1f8fe0"/><path d="M.5 3.500l8 6 8-6" stroke="#0f6fc0" stroke-width=".8" fill="none"/></svg>
<!-- chrome (active) -->
<div class="a" style="left:465px;top:530px;width:33.500px;height:28.500px;background:#4b423f"></div>
<div class="a" style="left:465px;top:557px;width:33.500px;height:1.500px;background:#e58a9a"></div>
<svg class="a" style="left:473.500px;top:535.500px" width="16" height="16" viewBox="0 0 16 16"><circle cx="8" cy="8" r="7.500" fill="#e33b2e"/><path d="M8 8L1.500 4.200A7.500 7.500 0 0 0 7.300 15.500z" fill="#2ea24c"/><path d="M8 8l-.7 7.500A7.500 7.500 0 0 0 14.500 4.200z" fill="#fbc116"/><path d="M1.500 4.200h13A7.500 7.500 0 0 0 1.500 4.200z" fill="#e33b2e"/><circle cx="8" cy="8" r="3.500" fill="#fff"/><circle cx="8" cy="8" r="2.700" fill="#4688f1"/></svg>
<!-- word -->
<svg class="a" style="left:509.500px;top:535.500px" width="17" height="16" viewBox="0 0 17 16"><rect x="4" y="1" width="12.500" height="14" fill="#f3f6fb" stroke="#b8c8e0" stroke-width=".6"/><path d="M10 4h5M10 6.500h5M10 9h5M10 11.500h5" stroke="#7a9ad0" stroke-width=".9"/><rect x="0" y="2.500" width="10" height="11" fill="#2a5caa"/><path d="M1.800 5l1.500 6 1.700-5 1.700 5 1.500-6" stroke="#fff" stroke-width="1.200" fill="none"/></svg>
<!-- ppt -->
<svg class="a" style="left:544.500px;top:535.500px" width="17" height="16" viewBox="0 0 17 16"><rect x="4" y="1" width="12.500" height="14" fill="#fbf3f0" stroke="#e0b8a8" stroke-width=".6"/><circle cx="12" cy="7" r="3" fill="#e8a088"/><path d="M10 12h5" stroke="#d08870" stroke-width=".9"/><rect x="0" y="2.500" width="10" height="11" fill="#d24726"/><path d="M3.500 11V5h2.200a1.900 1.900 0 0 1 0 3.800H3.500" stroke="#fff" stroke-width="1.300" fill="none"/></svg>
<!-- excel -->
<svg class="a" style="left:580px;top:535.500px" width="17" height="16" viewBox="0 0 17 16"><rect x="4" y="1" width="12.500" height="14" fill="#f0f8f2" stroke="#a8d0b4" stroke-width=".6"/><path d="M10 4h5M10 6.500h5M10 9h5M10 11.500h5M12.500 3v10" stroke="#6ab080" stroke-width=".8"/><rect x="0" y="2.500" width="10" height="11" fill="#1f7244"/><path d="M3 5l4 6M7 5l-4 6" stroke="#fff" stroke-width="1.300"/></svg>
<!-- geogebra -->
<svg class="a" style="left:616px;top:535.500px" width="16" height="16" viewBox="0 0 16 16"><rect width="16" height="16" rx="1.500" fill="#f4f4f8"/><ellipse cx="8" cy="8.500" rx="5" ry="4.200" fill="none" stroke="#555" stroke-width="1.100" transform="rotate(-20 8 8.500)"/><circle cx="8.500" cy="3.500" r="1.700" fill="#5a6ad8" stroke="#222" stroke-width=".5"/><circle cx="3.500" cy="6.500" r="1.700" fill="#5a6ad8" stroke="#222" stroke-width=".5"/><circle cx="13" cy="7.500" r="1.700" fill="#5a6ad8" stroke="#222" stroke-width=".5"/><circle cx="5" cy="12" r="1.700" fill="#5a6ad8" stroke="#222" stroke-width=".5"/><circle cx="11" cy="12.500" r="1.700" fill="#5a6ad8" stroke="#222" stroke-width=".5"/></svg>
<!-- calculator -->
<svg class="a" style="left:654.500px;top:535px" width="12" height="17" viewBox="0 0 12 17"><rect width="12" height="17" rx="1" fill="#7a8a9a"/><rect x="1.500" y="1.500" width="9" height="4" fill="#d0e4f4"/><g fill="#3a78c8"><rect x="1.500" y="7" width="2.400" height="2.200"/><rect x="4.800" y="7" width="2.400" height="2.200"/><rect x="8.100" y="7" width="2.400" height="2.200"/><rect x="1.500" y="10.200" width="2.400" height="2.200"/><rect x="4.800" y="10.200" width="2.400" height="2.200"/><rect x="8.100" y="10.200" width="2.400" height="2.200"/><rect x="1.500" y="13.400" width="2.400" height="2.200"/><rect x="4.800" y="13.400" width="2.400" height="2.200"/><rect x="8.100" y="13.400" width="2.400" height="2.200"/></g></svg>
<!-- snipping -->
<svg class="a" style="left:687.500px;top:535.500px" width="18" height="16" viewBox="0 0 18 16"><ellipse cx="9" cy="6" rx="8.500" ry="5" fill="#e9e4e8" stroke="#c05060" stroke-width=".8"/><path d="M4 3.500c3 2 7 2 10 0" stroke="#c05060" stroke-width=".8" fill="none"/><circle cx="10" cy="13" r="2" fill="none" stroke="#2a78d0" stroke-width="1.200"/><circle cx="14" cy="11" r="2" fill="none" stroke="#2a78d0" stroke-width="1.200"/><path d="M10.500 11l-4-6M12.500 10L7 4" stroke="#888" stroke-width=".9"/></svg>
<!-- sticky -->
<svg class="a" style="left:724px;top:536px" width="16" height="15" viewBox="0 0 16 15"><rect width="16" height="15" fill="#f8d800"/><path d="M10.500 15L16 9.500V15z" fill="#3a3a3a"/></svg>
<!-- tray -->
<svg class="a" style="left:811.500px;top:540px" width="11" height="8" viewBox="0 0 11 8"><path d="M1 6.500L5.500 2 10 6.500" stroke="#fff" stroke-width="1.100" fill="none"/></svg>
<svg class="a" style="left:829px;top:540.500px" width="13" height="8" viewBox="0 0 13 8"><rect x=".5" y=".5" width="10.500" height="7" rx=".5" fill="none" stroke="#fff" stroke-width="1"/><rect x="2" y="2" width="6" height="4" fill="#fff"/><rect x="11.500" y="2.500" width="1.200" height="3" fill="#fff"/></svg>
<svg class="a" style="left:846px;top:538px" width="13" height="12" viewBox="0 0 13 12"><path d="M1 11A10 10 0 0 1 11 1M3.800 11a7.200 7.200 0 0 1 7.200-7.200M6.600 11a4.400 4.400 0 0 1 4.400-4.400" stroke="#fff" stroke-width="1" fill="none"/><rect x="9" y="9" width="2.200" height="2.200" fill="#fff"/></svg>
<svg class="a" style="left:863px;top:538.500px" width="13" height="11" viewBox="0 0 13 11"><path d="M.8 3.800h2L5.800 1v9L2.800 7.200h-2z" fill="none" stroke="#fff" stroke-width=".9"/><path d="M7.500 3.500a3 3 0 0 1 0 4M9.300 2a5.200 5.200 0 0 1 0 7" stroke="#fff" stroke-width=".9" fill="none"/><path d="M11 .800a7 7 0 0 1 0 9.400" stroke="#9a9290" stroke-width=".8" fill="none"/></svg>
<div class="t" style="left:884.4px;top:540.00px;font-size:8.8px;color:#fff;transform:scaleX(0.7666);">ESP</div>
<div class="t" style="left:910.7px;top:534.00px;font-size:9px;color:#fff;transform:scaleX(0.9420);">9:51 p. m.</div>
<div class="t" style="left:909px;top:547.00px;font-size:9px;color:#fff;transform:scaleX(0.9324);">18/10/2020</div>
<svg class="a" style="left:963.500px;top:538px" width="18" height="18" viewBox="0 0 18 18"><path d="M.8 1h11.400v8.500H5L2.300 12V9.500H.8z" fill="#fff"/><path d="M2.800 3.500h7.500M2.800 5.500h7.500M2.800 7.500h5" stroke="#2a201c" stroke-width=".8"/><circle cx="12" cy="12.200" r="4.800" fill="#2a201c" stroke="#d0ccca" stroke-width=".9"/></svg>
<div class="t" style="left:973.2px;top:546.00px;font-size:8.51687px;color:#fff;font-weight:bold;transform:scaleX(0.9500);">3</div>
<div class="a" style="left:989.500px;top:530px;width:1px;height:28.500px;background:#6a625e"></div>
</div>
</body></html>
